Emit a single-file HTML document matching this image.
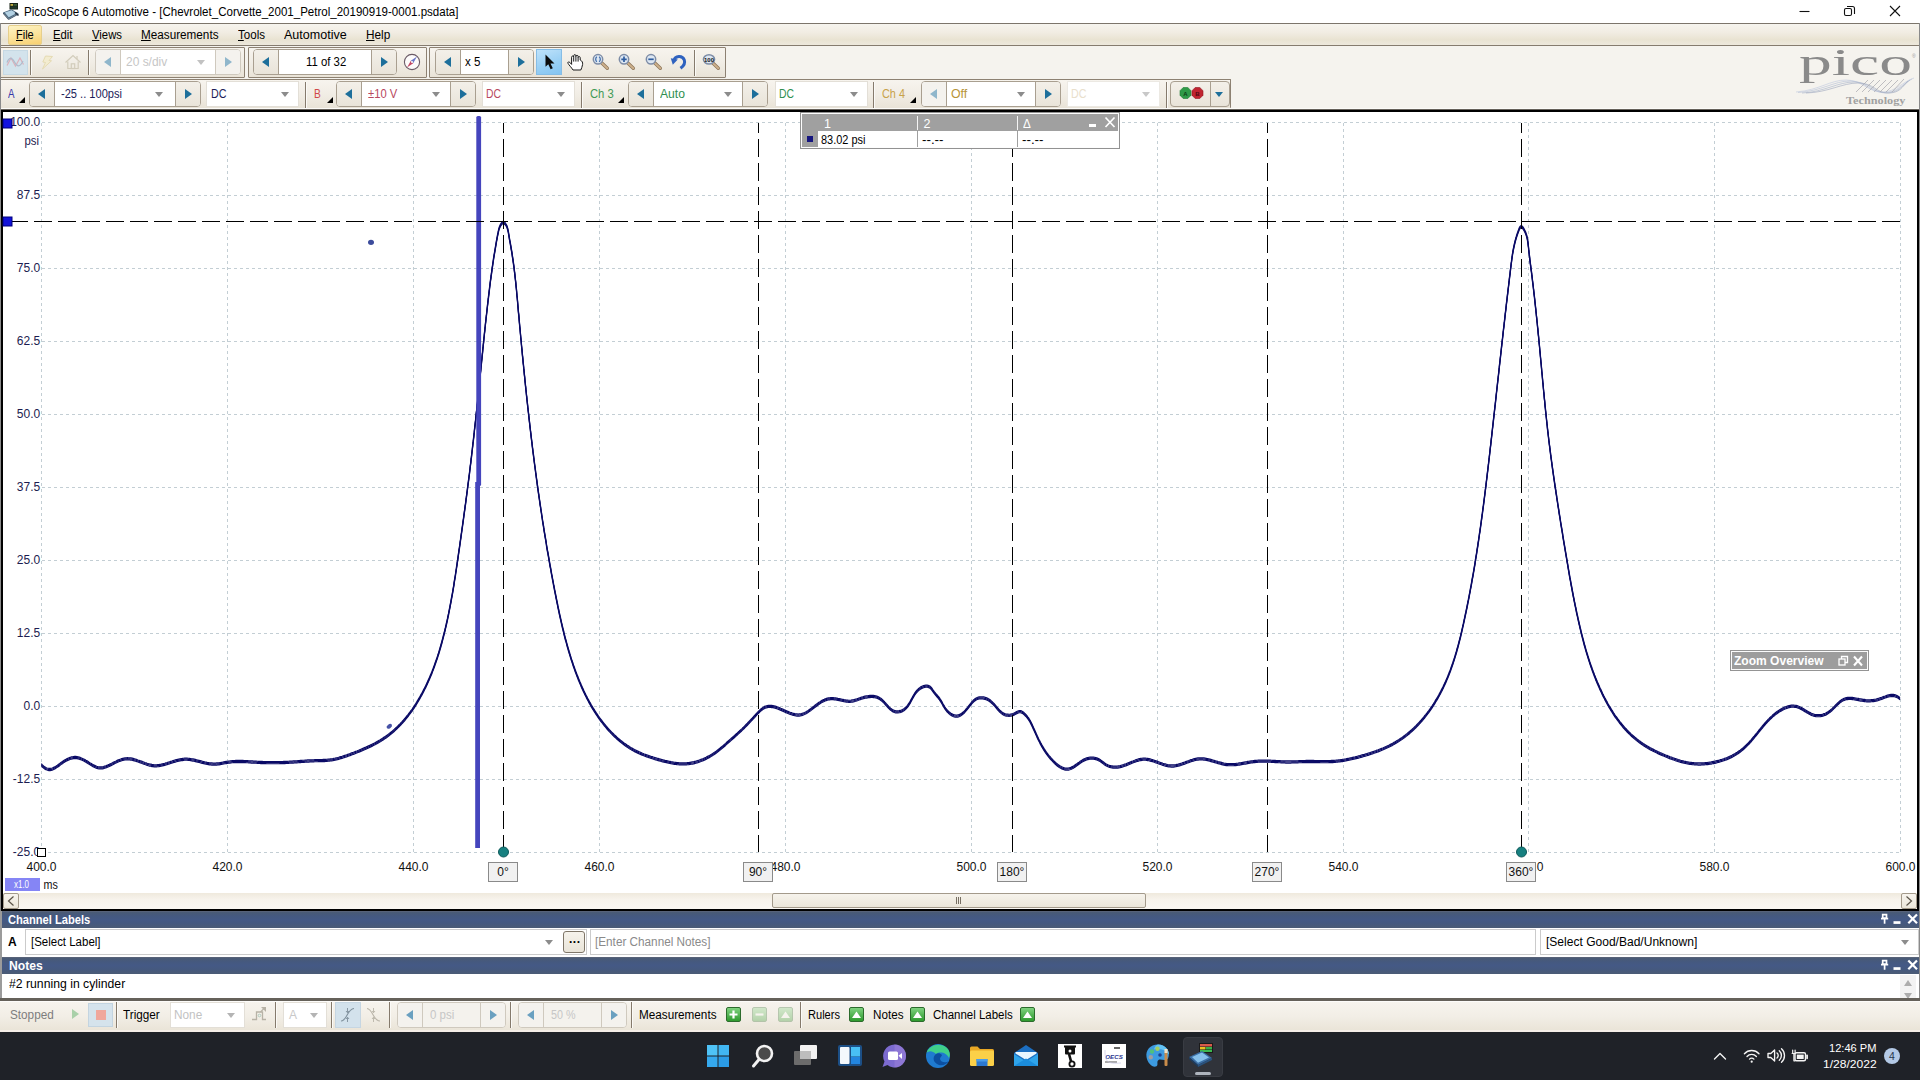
<!DOCTYPE html>
<html lang="en">
<head>
<meta charset="utf-8">
<title>PicoScope 6 Automotive</title>
<style>
*{box-sizing:border-box;margin:0;padding:0}
html,body{width:1920px;height:1080px;overflow:hidden;background:#f5f3ee;font-family:"Liberation Sans",sans-serif;font-size:12px;color:#000}
.abs{position:absolute}
.t{position:absolute;white-space:nowrap;line-height:14px}
#title{left:0;top:0;width:1920px;height:23px;background:#fff}
#menubar{left:0;top:23px;width:1920px;height:23px;border-top:1px solid #7c756b;border-bottom:1px solid #857b6e;background:linear-gradient(#f6f4ee,#f1ece2 42%,#e9e3d2 75%,#ede8dc)}
#tb1bg{left:0;top:46px;width:1920px;height:33px;background:#f5f3ee}
.grp{position:absolute;border:1px solid #8d8172;border-radius:1px;background:linear-gradient(#f7f4ee,#f1ede5 50%,#e9e3d7)}
.sep{position:absolute;width:1px;background:#857a6c;box-shadow:1px 0 0 #fbfaf7}
.spin{position:absolute;border:1px solid #a99f90;border-radius:4px;background:#fff;overflow:hidden}
.spin .b{position:absolute;top:0;bottom:0;width:25px;background:linear-gradient(#f3f0e9,#e9e4d9)}
.spin .b.l{left:0;border-right:1px solid #a99f90}
.spin .b.r{right:0;border-left:1px solid #a99f90}
.spin.dis{border-color:#cfc9be}
.spin.dis .b{background:#f4f2ee;border-color:#cfc9be}
.tri{position:absolute;width:0;height:0;border-style:solid}
.combo{position:absolute;background:#fff;border:1px solid #e3dfd7}
.dd{position:absolute;width:0;height:0;border-left:4.5px solid transparent;border-right:4.5px solid transparent;border-top:5px solid #8c8c8c}
#graph{left:1px;top:110px;width:1918px;height:801px;border:2px solid #000;background:#fff}
.dock{position:absolute;left:2px;width:1917px;height:17px;background:linear-gradient(#5e667a,#4a5b76 8%,#45597f 28%,#445985 50%,#45597f 72%,#4b5b75);color:#fff;font-weight:bold;font-size:13px}
.field{position:absolute;background:#fff;border:1px solid #cbcbcb}
#status{left:0;top:998px;width:1920px;height:34px;border-top:3px solid #65615a;box-shadow:inset 0 1px 0 #fdfcfa,inset 0 -2px 0 #f5eee7;background:linear-gradient(#f7f4ee,#f2eee6 50%,#e9e3d6)}
#status>*{margin-top:-2px}
#status .spin.dis{background:#f4f2ed}
#taskbar{left:0;top:1032px;width:1920px;height:48px;background:#1f2228}
.sbb{width:16px;height:16px;border:1px solid #a39a8b;border-radius:2px;background:linear-gradient(#f7f4ee,#ebe6da)}
.gbtn{position:absolute;width:15px;height:15px;border:1px solid #2c6b2c;border-radius:2px;background:linear-gradient(#7fd27f,#2e9a2e)}
</style>
</head>
<body>
<!-- ================= TITLE BAR ================= -->
<div id="title" class="abs">
  <svg class="abs" style="left:1.500px;top:2px" width="20" height="18" viewBox="0 0 20 18">
    <rect x="7.500" y="1" width="8.500" height="6.500" fill="#1a2418"/><rect x="8.500" y="2" width="2.500" height="1.800" fill="#c8b040"/><rect x="11.500" y="2" width="3.500" height="1.800" fill="#3a5a34"/><rect x="8.500" y="4.500" width="6.500" height="2.200" fill="#20382a"/>
    <polygon points="1,10.500 9.500,7.300 16.500,11.500 6.500,17" fill="#4e6a80"/><polygon points="2.800,10.600 9.500,8.200 14.600,11.300 6.700,15.300" fill="#b4d2e4"/><polygon points="1,10.500 6.500,17 6.500,18 1,11.800" fill="#2c3e50"/><polygon points="6.500,17 16.500,11.500 16.500,12.600 6.500,18" fill="#3a5066"/><path d="M13,10.500L16.500,13.500" stroke="#1e2a36" stroke-width="1.500"/>
  </svg>
  <div class="t"  style="left:23.6px;top:5px;font-size:12.4px;transform-origin:0 0;transform:scaleX(0.9303)">PicoScope 6 Automotive - [Chevrolet_Corvette_2001_Petrol_20190919-0001.psdata]</div>
  <svg class="abs" style="left:1790px;top:0" width="130" height="23" viewBox="0 0 130 23" fill="none" stroke="#111" stroke-width="1.1">
    <path d="M9.5,11.5h10"/>
    <rect x="54.5" y="8.5" width="7" height="7" rx="1.5"/><path d="M57,6.5h5.5a2,2 0 0 1 2,2V14"/>
    <path d="M100,6l10,10M110,6l-10,10"/>
  </svg>
</div>
<!-- ================= MENU BAR ================= -->
<div id="menubar" class="abs">
  <div class="abs" style="left:8px;top:1px;width:34px;height:20px;border:1px solid #e6cf8c;border-radius:2px;background:linear-gradient(170deg,#fdf3c4,#fbe29a 55%,#f8d070)"></div>
  <div class="t"  style="left:16px;top:4px;transform-origin:0 0;transform:scaleX(0.9169)"><u>F</u>ile</div>
  <div class="t"  style="left:53px;top:4px;transform-origin:0 0;transform:scaleX(0.9419)"><u>E</u>dit</div>
  <div class="t"  style="left:91.75px;top:4px;transform-origin:0 0;transform:scaleX(0.9430)"><u>V</u>iews</div>
  <div class="t"  style="left:141.25px;top:4px;transform-origin:0 0;transform:scaleX(0.9764)"><u>M</u>easurements</div>
  <div class="t"  style="left:237.5px;top:4px;transform-origin:0 0;transform:scaleX(0.9637)"><u>T</u>ools</div>
  <div class="t"  style="left:284.25px;top:4px;transform-origin:0 0;transform:scaleX(1.0453)">Automotive</div>
  <div class="t"  style="left:366.25px;top:4px;transform-origin:0 0;transform:scaleX(0.9823)"><u>H</u>elp</div>
</div>
<!--TOOLBARS_BEGIN-->
<!-- ================= TOOLBAR 1 ================= -->
<div class="grp" style="left:0;top:47px;width:245px;height:31px">
  <div class="abs" style="left:2px;top:2px;width:25px;height:25px;background:#d3e3ec;border:1px solid #c6d9e4"></div>
  <svg class="abs" style="left:5px;top:8px" width="20" height="12" viewBox="0 0 20 12" fill="none" stroke-width="1.200"><path d="M1,9.500 L5,2 L9.500,10 L14,2 L17.500,8.500" stroke="#dcb0ba"/><path d="M1,6.500 C3,1 6,1 8.500,6 S14,11.500 17,5" stroke="#aebccd"/></svg>
  <div class="sep" style="left:29px;top:2px;height:25px"></div>
  <svg class="abs" style="left:39px;top:7px" width="15" height="15" viewBox="0 0 15 15"><path d="M5.500,1 L12.500,1.500 L9,5.500 L11.500,5.800 L2.500,14 L5.500,7.500 L2.800,7 Z" fill="#f3ecd0" stroke="#e3d8ae" stroke-width="0.900"/></svg>
  <svg class="abs" style="left:63px;top:6px" width="18" height="16" viewBox="0 0 18 16" fill="none" stroke="#d2ccbb" stroke-width="1.200"><path d="M1.500,8.500 L9,1.500 L16.500,8.500"/><path d="M3.800,7.500 V14.500 H14.200 V7.500"/><rect x="7.300" y="9.800" width="3.400" height="4.700"/><path d="M13,2 V5"/></svg>
  <div class="sep" style="left:87px;top:2px;height:25px"></div>
  <div class="spin dis" style="left:94px;top:1px;width:146px;height:26px">
    <div class="b l"><i class="tri" style="left:8px;top:7px;border-width:5px 7px 5px 0;border-color:transparent #8fb6cb transparent transparent"></i></div>
    <div class="t"  style="left:29.750px;top:5px;color:#c6c6c6;font-size:12.500px;transform-origin:0 0;transform:scaleX(0.9572)">20 s/div</div>
    <i class="dd" style="left:101px;top:10px;border-top-color:#c2c2c2"></i>
    <div class="b r"><i class="tri" style="left:9px;top:7px;border-width:5px 0 5px 7px;border-color:transparent transparent transparent #8fb6cb"></i></div>
  </div>
</div>
<div class="grp" style="left:248px;top:47px;width:179px;height:31px">
  <div class="spin" style="left:4px;top:1px;width:144px;height:26px">
    <div class="b l"><i class="tri" style="left:8px;top:7px;border-width:5px 7px 5px 0;border-color:transparent #1d6f9b transparent transparent"></i></div>
    <div class="t"  style="left:51.5px;top:5px;font-size:12.5px;transform-origin:0 0;transform:scaleX(0.9093)">11 of 32</div>
    <div class="b r"><i class="tri" style="left:9px;top:7px;border-width:5px 0 5px 7px;border-color:transparent transparent transparent #1d6f9b"></i></div>
  </div>
  <svg class="abs" style="left:153px;top:4px" width="20" height="20" viewBox="0 0 20 20"><circle cx="10" cy="10" r="7.6" fill="#fdfbfb" stroke="#6a5a66" stroke-width="1.1"/><path d="M15,4.600 L11.200,11.200 L8.800,8.800 Z" fill="#6c78c8"/><path d="M5,15.400 L8.800,8.800 L11.200,11.200 Z" fill="#c24a66"/><circle cx="10" cy="10" r="1" fill="#fff"/></svg>
</div>
<div class="grp" style="left:429px;top:47px;width:297px;height:31px">
  <div class="spin" style="left:5px;top:1px;width:99px;height:26px">
    <div class="b l"><i class="tri" style="left:8px;top:7px;border-width:5px 7px 5px 0;border-color:transparent #1d6f9b transparent transparent"></i></div>
    <div class="t"  style="left:28.75px;top:5px;font-size:12.5px;transform-origin:0 0;transform:scaleX(0.9288)">x 5</div>
    <div class="b r"><i class="tri" style="left:9px;top:7px;border-width:5px 0 5px 7px;border-color:transparent transparent transparent #1d6f9b"></i></div>
  </div>
  <div class="abs" style="left:106px;top:1px;width:26px;height:26px;background:linear-gradient(160deg,#bfe2fa,#9ad0f5 55%,#84c4f2);border:1px solid #86bde6"></div>
  <svg class="abs" style="left:113px;top:5px" width="14" height="18" viewBox="0 0 14 18"><path d="M2.500,1.500 L2.500,13.800 L5.300,11.200 L7.600,16.300 L9.800,15.300 L7.500,10.400 L11.500,10.400 Z" fill="#0a0a0a"/></svg>
  <svg class="abs" style="left:135.500px;top:4px" width="20" height="20" viewBox="0 0 20 20" fill="#fff" stroke="#1a1a1a" stroke-width="1" stroke-linejoin="round"><path d="M7,18 C5.500,15.500 3,13.200 2,11.300 C1.400,10.100 2.800,9.300 3.800,10.400 L5.600,12.400 V5.200 C5.600,3.600 7.700,3.600 7.700,5.200 V3.800 C7.700,2.200 9.900,2.200 9.900,3.800 V4.400 C9.900,2.900 12.100,2.900 12.100,4.400 V5.600 C12.100,4.200 14.200,4.200 14.200,5.600 V8 C16.300,9 16.800,10.500 16.600,12.500 C16.400,14.800 15.300,16.300 14.800,18 Z"/><path d="M7.700,5.200V9.600M9.900,4.200V9.600M12.100,5.600V9.600" fill="none"/></svg>
  <svg class="abs" style="left:159.7px;top:4px" width="22" height="20" viewBox="0 0 22 20"><path d="M11.300,10.600 L17.300,16.300" stroke="#8c7458" stroke-width="3.400" stroke-linecap="round"/><path d="M11.300,10.600 L17.300,16.300" stroke="#cdb08c" stroke-width="2" stroke-linecap="round"/><ellipse cx="8" cy="7.300" rx="4.7" ry="4.7" fill="#dde7f2" stroke="#7d8ca6" stroke-width="1.500"/><path d="M6.900,4.800 C5.300,5.800 5.300,8.800 6.900,9.800 M9.100,4.800 C10.700,5.800 10.700,8.800 9.100,9.800" fill="none" stroke="#3a68a8" stroke-width="1.200"/></svg>
  <svg class="abs" style="left:186.3px;top:4px" width="22" height="20" viewBox="0 0 22 20"><path d="M11.300,10.600 L17.300,16.300" stroke="#8c7458" stroke-width="3.400" stroke-linecap="round"/><path d="M11.300,10.600 L17.300,16.300" stroke="#cdb08c" stroke-width="2" stroke-linecap="round"/><ellipse cx="8" cy="7.300" rx="4.7" ry="4.7" fill="#dde7f2" stroke="#7d8ca6" stroke-width="1.500"/><path d="M5.300,7.300 H10.700 M8,4.600 V10" fill="none" stroke="#2f5da0" stroke-width="1.700"/></svg>
  <svg class="abs" style="left:212.8px;top:4px" width="22" height="20" viewBox="0 0 22 20"><path d="M11.300,10.600 L17.300,16.300" stroke="#8c7458" stroke-width="3.400" stroke-linecap="round"/><path d="M11.300,10.600 L17.300,16.300" stroke="#cdb08c" stroke-width="2" stroke-linecap="round"/><ellipse cx="8" cy="7.300" rx="4.7" ry="4.7" fill="#dde7f2" stroke="#7d8ca6" stroke-width="1.500"/><path d="M5.300,7.300 H10.700" fill="none" stroke="#2f5da0" stroke-width="1.700"/></svg>
  <svg class="abs" style="left:239px;top:4px" width="20" height="20" viewBox="0 0 20 20"><path d="M5,8.500 C6,3.500 13.500,3 15.300,8 C16.500,11.500 14,14.500 11.500,16.300" fill="none" stroke="#2f62bf" stroke-width="3"/><path d="M1.800,6.300 L8.800,7.600 L3.800,12.800 Z" fill="#2f62bf"/></svg>
  <div class="sep" style="left:264px;top:2px;height:26px"></div>
  <svg class="abs" style="left:270.6px;top:4px" width="22" height="20" viewBox="0 0 22 20"><path d="M11.300,10.600 L17.300,16.300" stroke="#8c7458" stroke-width="3.400" stroke-linecap="round"/><path d="M11.300,10.600 L17.300,16.300" stroke="#cdb08c" stroke-width="2" stroke-linecap="round"/><ellipse cx="8" cy="7.300" rx="5.6" ry="4.6" fill="#dde7f2" stroke="#7d8ca6" stroke-width="1.500"/><text x="8" y="9.500" font-family="Liberation Sans, sans-serif" font-size="6" font-weight="bold" text-anchor="middle" fill="#111">100</text></svg>
</div>
<!-- ================= TOOLBAR 2 ================= -->
<div class="abs" style="left:0;top:108px;width:1920px;height:1px;background:#fcfbf8"></div><div class="abs" style="left:0;top:109px;width:1920px;height:1px;background:#66615a"></div>
<div class="grp" style="left:0;top:79px;width:1231px;height:29px;border-bottom:none">
  <!-- A -->
  <div class="t"  style="left:6.5px;top:7px;color:#3535a8;font-size:12.5px;transform-origin:0 0;transform:scaleX(0.7790)">A</div><i class="tri" style="left:17.5px;top:16.5px;border-width:0 0 6px 6px;border-color:transparent transparent #000 transparent"></i>
  <div class="spin" style="left:28px;top:1px;width:172px;height:26px">
    <div class="b l"><i class="tri" style="left:8px;top:7px;border-width:5px 7px 5px 0;border-color:transparent #1d6f9b transparent transparent"></i></div>
    <div class="t"  style="left:30.75px;top:5px;color:#1c1c58;font-size:12.5px;transform-origin:0 0;transform:scaleX(0.8867)">-25 .. 100psi</div>
    <i class="dd" style="left:125px;top:10px"></i>
    <div class="b r"><i class="tri" style="left:9px;top:7px;border-width:5px 0 5px 7px;border-color:transparent transparent transparent #1d6f9b"></i></div>
  </div>
  <div class="combo" style="left:205px;top:1px;width:93px;height:26px"><div class="t"  style="left:3.75px;top:5px;color:#1c1c58;font-size:12.5px;transform-origin:0 0;transform:scaleX(0.8581)">DC</div><i class="dd" style="left:74px;top:10px"></i></div>
  <div class="sep" style="left:304px;top:2px;height:26px"></div>
  <!-- B -->
  <div class="t"  style="left:312.75px;top:7px;color:#d04848;font-size:12.5px;transform-origin:0 0;transform:scaleX(0.8150)">B</div><i class="tri" style="left:325.5px;top:16.5px;border-width:0 0 6px 6px;border-color:transparent transparent #000 transparent"></i>
  <div class="spin" style="left:335px;top:1px;width:140px;height:26px">
    <div class="b l"><i class="tri" style="left:8px;top:7px;border-width:5px 7px 5px 0;border-color:transparent #1d6f9b transparent transparent"></i></div>
    <div class="t"  style="left:30.5px;top:5px;color:#b84860;font-size:12.5px;transform-origin:0 0;transform:scaleX(0.8978)">±10 V</div>
    <i class="dd" style="left:95px;top:10px"></i>
    <div class="b r"><i class="tri" style="left:9px;top:7px;border-width:5px 0 5px 7px;border-color:transparent transparent transparent #1d6f9b"></i></div>
  </div>
  <div class="combo" style="left:481px;top:1px;width:93px;height:26px"><div class="t"  style="left:3.25px;top:5px;color:#b84860;font-size:12.5px;transform-origin:0 0;transform:scaleX(0.8304)">DC</div><i class="dd" style="left:74px;top:10px"></i></div>
  <div class="sep" style="left:580px;top:2px;height:26px"></div>
  <!-- Ch 3 -->
  <div class="t"  style="left:589px;top:7px;color:#3f9a55;font-size:12.5px;transform-origin:0 0;transform:scaleX(0.8994)">Ch 3</div><i class="tri" style="left:616.5px;top:16.5px;border-width:0 0 6px 6px;border-color:transparent transparent #000 transparent"></i>
  <div class="spin" style="left:627px;top:1px;width:140px;height:26px">
    <div class="b l"><i class="tri" style="left:8px;top:7px;border-width:5px 7px 5px 0;border-color:transparent #1d6f9b transparent transparent"></i></div>
    <div class="t"  style="left:30.5px;top:5px;color:#2f8f50;font-size:12.5px;transform-origin:0 0;transform:scaleX(0.9721)">Auto</div>
    <i class="dd" style="left:95px;top:10px"></i>
    <div class="b r"><i class="tri" style="left:9px;top:7px;border-width:5px 0 5px 7px;border-color:transparent transparent transparent #1d6f9b"></i></div>
  </div>
  <div class="combo" style="left:774px;top:1px;width:93px;height:26px"><div class="t"  style="left:2.75px;top:5px;color:#2f8f50;font-size:12.5px;transform-origin:0 0;transform:scaleX(0.8304)">DC</div><i class="dd" style="left:74px;top:10px"></i></div>
  <div class="sep" style="left:872px;top:2px;height:26px"></div>
  <!-- Ch 4 -->
  <div class="t"  style="left:881px;top:7px;color:#c8a24a;font-size:12.5px;transform-origin:0 0;transform:scaleX(0.8710)">Ch 4</div><i class="tri" style="left:908.5px;top:16.5px;border-width:0 0 6px 6px;border-color:transparent transparent #000 transparent"></i>
  <div class="spin" style="left:920px;top:1px;width:140px;height:26px">
    <div class="b l" style="background:#f4f2ee"><i class="tri" style="left:8px;top:7px;border-width:5px 7px 5px 0;border-color:transparent #8fb6cb transparent transparent"></i></div>
    <div class="t"  style="left:29.25px;top:5px;color:#b89438;font-size:12.5px;transform-origin:0 0;transform:scaleX(0.9877)">Off</div>
    <i class="dd" style="left:95px;top:10px"></i>
    <div class="b r"><i class="tri" style="left:9px;top:7px;border-width:5px 0 5px 7px;border-color:transparent transparent transparent #1d6f9b"></i></div>
  </div>
  <div class="combo" style="left:1066px;top:1px;width:93px;height:26px;border-color:#ece9e3"><div class="t"  style="left:2.75px;top:5px;color:#e9e0cc;font-size:12.5px;transform-origin:0 0;transform:scaleX(0.8581)">DC</div><i class="dd" style="left:74px;top:10px;border-top-color:#c8c8c8"></i></div>
  <div class="sep" style="left:1165px;top:2px;height:26px"></div>
  <div class="spin" style="left:1169px;top:1px;width:60px;height:26px;background:linear-gradient(#f3f0e9,#e9e4d9)">
    <svg class="abs" style="left:8px;top:5px" width="26" height="14" viewBox="0 0 26 14"><polygon points="4.200,0.500 8.800,0.500 12,3.700 12,8.300 8.800,11.500 4.200,11.500 1,8.300 1,3.700" fill="#2f9a48" stroke="#1e7a34" stroke-width=".6"/><polygon points="16.200,0.500 20.800,0.500 24,3.700 24,8.300 20.800,11.500 16.200,11.500 13,8.300 13,3.700" fill="#c02430" stroke="#8e1420" stroke-width=".6"/><text x="6.500" y="8.500" font-family="Liberation Sans, sans-serif" font-size="6" font-weight="bold" text-anchor="middle" fill="#0d3d18">A</text><text x="18.500" y="8.500" font-family="Liberation Sans, sans-serif" font-size="6" font-weight="bold" text-anchor="middle" fill="#4d0810">B</text></svg>
    <div class="abs" style="left:39px;top:0;width:1px;height:26px;background:#a99f90"></div>
    <i class="dd" style="left:44px;top:10px;border-top-color:#1d6f9b"></i>
  </div>
</div>
<!-- pico logo -->
<svg class="abs" style="left:1790px;top:46px" width="130" height="62" viewBox="0 0 130 62">
  <g fill="none" stroke-width="0.7" opacity=".75">
    <path d="M6,46 C30,44 40,34 56,34 S78,46 92,46 S112,36 124,32" stroke="#b7c3dc"/>
    <path d="M8,46.500 C32,45 44,35 60,35 S80,46.500 94,46.500 S112,38 122,33" stroke="#a9b6d2"/>
    <path d="M12,47 C34,46 48,36 64,36 S84,47 96,47 S112,40 120,34" stroke="#9aa7c4"/>
    <path d="M16,47 C38,46.500 52,37 68,37 S86,47 98,47 S112,41 118,35" stroke="#8f9bb6"/>
    <path d="M78,34 L66,46 M84,34 L72,46 M90,34 L78,46 M96,34 L84,46 M102,34 L90,46 M108,34 L96,46 M114,33 L102,46" stroke="#8c8c96"/>
  </g>
  <text x="9" y="29" font-family="Liberation Serif, serif" font-size="38" fill="#8a8a8a" textLength="113" lengthAdjust="spacingAndGlyphs">pico</text>
  <text x="122" y="12" font-family="Liberation Sans, sans-serif" font-size="5" fill="#9a9a9a">®</text>
  <text x="56" y="57.500" font-family="Liberation Serif, serif" font-size="10.500" font-weight="bold" fill="#a2a2a2" textLength="59.5" lengthAdjust="spacingAndGlyphs">Technology</text>
</svg>
<!--TOOLBARS_END-->
<!-- ================= GRAPH ================= -->
<div id="graph" class="abs"></div>
<svg class="abs" style="left:0;top:0" width="1920" height="1080" viewBox="0 0 1920 1080" font-family="Liberation Sans, sans-serif" font-size="12">
  <defs><path id="wv" d="M41.3,764.6 42.4,765.9 43.6,767 44.7,767.9 45.9,768.6 47,769 48,769.3 49.1,769.5 50.1,769.5 51.2,769.3 52.2,769.1 53.2,768.7 54.2,768.2 55.2,767.6 56.2,767 57.3,766.3 58.3,765.6 59.3,764.9 60.3,764.1 61.3,763.3 62.4,762.6 63.5,761.8 64.5,761.1 65.6,760.5 66.7,759.9 67.8,759.3 69,758.8 70.1,758.4 71.2,758 72.4,757.8 73.5,757.6 74.6,757.5 75.8,757.5 76.9,757.6 78.1,757.9 79.2,758.2 80.3,758.5 81.5,759 82.6,759.5 83.7,760 84.9,760.6 86,761.3 87.1,761.9 88.2,762.6 89.2,763.3 90.3,764 91.4,764.6 92.5,765.3 93.6,765.9 94.7,766.4 95.7,766.9 96.8,767.3 97.9,767.6 99,767.8 100.1,767.9 101.2,767.9 102.4,767.8 103.5,767.6 104.6,767.2 105.8,766.9 106.9,766.4 108.1,765.9 109.2,765.4 110.4,764.8 111.5,764.3 112.7,763.7 113.8,763.1 114.9,762.5 116.1,762 117.2,761.4 118.3,760.9 119.4,760.5 120.6,760.1 121.7,759.7 122.8,759.4 123.9,759.1 125.1,758.9 126.2,758.8 127.4,758.7 128.5,758.8 129.7,758.9 130.9,759 132.1,759.2 133.2,759.5 134.4,759.8 135.6,760.2 136.8,760.5 137.9,761 139.1,761.4 140.3,761.8 141.5,762.2 142.6,762.7 143.8,763.1 144.9,763.5 146.1,763.9 147.2,764.3 148.4,764.7 149.5,765 150.7,765.2 151.9,765.5 153,765.6 154.2,765.8 155.3,765.8 156.5,765.8 157.7,765.7 158.9,765.6 160,765.4 161.2,765.2 162.4,764.9 163.6,764.6 164.7,764.3 165.9,763.9 167.1,763.6 168.3,763.2 169.5,762.8 170.6,762.4 171.8,762.1 173,761.7 174.2,761.3 175.3,761 176.5,760.7 177.7,760.4 178.8,760.1 180,759.8 181.2,759.6 182.3,759.5 183.5,759.3 184.7,759.2 185.9,759.2 187,759.2 188.2,759.3 189.4,759.4 190.6,759.6 191.8,759.8 192.9,760 194.1,760.2 195.3,760.5 196.5,760.8 197.7,761.1 198.9,761.4 200.1,761.7 201.2,762 202.4,762.3 203.6,762.6 204.8,762.9 206,763.1 207.2,763.4 208.3,763.6 209.5,763.8 210.7,763.9 211.9,764 213.1,764.1 214.3,764.1 215.5,764.1 216.7,764 217.9,763.9 219,763.8 220.2,763.6 221.4,763.4 222.6,763.2 223.8,762.9 225,762.7 226.2,762.5 227.4,762.3 228.6,762.1 229.8,762 231,761.8 232.2,761.7 233.4,761.6 234.6,761.6 235.8,761.5 237,761.5 238.2,761.5 239.4,761.5 240.6,761.5 241.8,761.5 242.9,761.5 244.1,761.6 245.3,761.6 246.5,761.7 247.7,761.7 248.9,761.8 250.1,761.9 251.3,762 252.5,762 253.7,762.1 254.9,762.2 256.1,762.2 257.3,762.3 258.5,762.4 259.7,762.4 260.9,762.5 262.1,762.5 263.3,762.6 264.5,762.6 265.7,762.6 266.9,762.7 268.1,762.7 269.3,762.7 270.5,762.7 271.7,762.7 272.9,762.7 274.1,762.7 275.3,762.7 276.5,762.7 277.7,762.7 278.9,762.7 280.1,762.6 281.3,762.6 282.5,762.6 283.7,762.5 284.9,762.5 286.1,762.4 287.3,762.4 288.5,762.3 289.7,762.2 290.9,762.2 292.1,762.1 293.3,762 294.5,761.9 295.7,761.8 296.9,761.8 298.1,761.7 299.3,761.6 300.4,761.5 301.6,761.4 302.8,761.3 304,761.3 305.2,761.2 306.4,761.1 307.6,761 308.8,761 310,760.9 311.3,760.9 312.5,760.8 313.7,760.8 314.9,760.7 316.1,760.7 317.3,760.7 318.5,760.6 319.7,760.6 320.9,760.6 322.1,760.6 323.3,760.5 324.5,760.5 325.7,760.4 326.9,760.3 328.1,760.2 329.3,760.1 330.5,759.9 331.7,759.8 332.8,759.6 334,759.3 335.2,759.1 336.3,758.8 337.5,758.6 338.6,758.3 339.8,757.9 340.9,757.6 342,757.3 343.2,756.9 344.3,756.5 345.4,756.2 346.6,755.8 347.7,755.4 348.8,755 350,754.6 351.1,754.1 352.2,753.7 353.4,753.3 354.5,752.9 355.6,752.4 356.8,752 357.9,751.5 359,751.1 360.2,750.6 361.3,750.2 362.4,749.7 363.5,749.2 364.6,748.7 365.8,748.2 366.9,747.7 368,747.2 369.1,746.7 370.2,746.2 371.3,745.6 372.3,745.1 373.4,744.5 374.5,744 375.6,743.4 376.6,742.8 377.7,742.2 378.7,741.6 379.8,741 380.8,740.4 381.8,739.7 382.8,739.1 383.8,738.4 384.8,737.7 385.8,737.1 386.8,736.4 387.7,735.7 388.7,734.9 389.6,734.2 390.5,733.5 391.5,732.7 392.4,732 393.3,731.2 394.2,730.4 395.1,729.6 395.9,728.8 396.8,728 397.7,727.1 398.5,726.3 399.3,725.5 400.2,724.6 401,723.7 401.8,722.9 402.6,722 403.4,721.1 404.2,720.2 405,719.3 405.7,718.4 406.5,717.4 407.2,716.5 408,715.6 408.7,714.6 409.4,713.7 410.2,712.7 410.9,711.7 411.6,710.8 412.3,709.8 412.9,708.8 413.6,707.8 414.3,706.8 414.9,705.8 415.6,704.8 416.2,703.8 416.9,702.7 417.5,701.7 418.1,700.7 418.7,699.6 419.3,698.6 419.9,697.6 420.5,696.5 421.1,695.4 421.7,694.4 422.3,693.3 422.8,692.3 423.4,691.2 423.9,690.1 424.5,689 425,688 425.6,686.9 426.1,685.8 426.6,684.7 427.1,683.6 427.6,682.5 428.1,681.4 428.6,680.3 429.1,679.2 429.6,678.1 430,677 430.5,675.9 431,674.8 431.4,673.7 431.9,672.6 432.3,671.5 432.7,670.3 433.2,669.2 433.6,668.1 434,667 434.4,665.9 434.8,664.7 435.2,663.6 435.6,662.5 436,661.3 436.4,660.2 436.8,659.1 437.2,657.9 437.6,656.8 437.9,655.6 438.3,654.5 438.7,653.4 439,652.2 439.4,651.1 439.7,649.9 440,648.8 440.4,647.6 440.7,646.5 441,645.3 441.4,644.1 441.7,643 442,641.8 442.3,640.7 442.6,639.5 442.9,638.4 443.2,637.2 443.5,636 443.8,634.9 444.1,633.7 444.4,632.5 444.7,631.4 445,630.2 445.3,629 445.5,627.9 445.8,626.7 446.1,625.5 446.3,624.4 446.6,623.2 446.9,622 447.1,620.8 447.4,619.7 447.6,618.5 447.9,617.3 448.1,616.1 448.4,615 448.6,613.8 448.8,612.6 449.1,611.4 449.3,610.3 449.5,609.1 449.8,607.9 450,606.7 450.2,605.6 450.4,604.4 450.7,603.2 450.9,602 451.1,600.8 451.3,599.7 451.5,598.5 451.7,597.3 452,596.1 452.2,594.9 452.4,593.7 452.6,592.6 452.8,591.4 453,590.2 453.2,589 453.4,587.8 453.6,586.6 453.8,585.5 454,584.3 454.1,583.1 454.3,581.9 454.5,580.7 454.7,579.5 454.9,578.4 455.1,577.2 455.3,576 455.5,574.8 455.6,573.6 455.8,572.4 456,571.2 456.2,570 456.4,568.9 456.5,567.7 456.7,566.5 456.9,565.3 457.1,564.1 457.2,562.9 457.4,561.7 457.6,560.5 457.8,559.4 457.9,558.2 458.1,557 458.3,555.8 458.4,554.6 458.6,553.4 458.8,552.2 458.9,551 459.1,549.9 459.3,548.7 459.5,547.5 459.6,546.3 459.8,545.1 460,543.9 460.1,542.7 460.3,541.5 460.5,540.3 460.6,539.2 460.8,538 461,536.8 461.1,535.6 461.3,534.4 461.5,533.2 461.6,532 461.8,530.8 462,529.6 462.1,528.4 462.3,527.3 462.5,526.1 462.6,524.9 462.8,523.7 463,522.5 463.1,521.3 463.3,520.1 463.5,518.9 463.6,517.7 463.8,516.6 463.9,515.4 464.1,514.2 464.3,513 464.4,511.8 464.6,510.6 464.8,509.4 464.9,508.2 465.1,507 465.2,505.8 465.4,504.7 465.6,503.5 465.7,502.3 465.9,501.1 466,499.9 466.2,498.7 466.3,497.5 466.5,496.3 466.7,495.1 466.8,493.9 467,492.7 467.1,491.6 467.3,490.4 467.4,489.2 467.6,488 467.7,486.8 467.9,485.6 468,484.4 468.2,483.2 468.4,482 468.5,480.8 468.7,479.7 468.8,478.5 469,477.3 469.1,476.1 469.3,474.9 469.4,473.7 469.6,472.5 469.7,471.3 469.8,470.1 470,468.9 470.1,467.7 470.3,466.5 470.4,465.4 470.6,464.2 470.7,463 470.9,461.8 471,460.6 471.1,459.4 471.3,458.2 471.4,457 471.6,455.8 471.7,454.6 471.8,453.4 472,452.3 472.1,451.1 472.3,449.9 472.4,448.7 472.5,447.5 472.7,446.3 472.8,445.1 472.9,443.9 473.1,442.7 473.2,441.5 473.4,440.3 473.5,439.1 473.6,437.9 473.8,436.8 473.9,435.6 474,434.4 474.2,433.2 474.3,432 474.4,430.8 474.5,429.6 474.7,428.4 474.8,427.2 474.9,426 475.1,424.8 475.2,423.6 475.3,422.4 475.5,421.3 475.6,420.1 475.7,418.9 475.8,417.7 476,416.5 476.1,415.3 476.2,414.1 476.3,412.9 476.5,411.7 476.6,410.5 476.7,409.3 476.9,408.1 477,406.9 477.1,405.7 477.2,404.6 477.4,403.4 477.5,402.2 477.6,401 477.7,399.8 477.8,398.6 478,397.4 478.1,396.2 478.2,395 478.3,393.8 478.5,392.6 478.6,391.4 478.7,390.2 478.8,389 479,387.8 479.1,386.6 479.2,385.4 479.3,384.3 479.4,383.1 479.6,381.9 479.7,380.7 479.8,379.5 479.9,378.3 480,377.1 480.2,375.9 480.3,374.7 480.4,373.5 480.5,372.3 480.7,371.1 480.8,369.9 480.9,368.7 481,367.5 481.1,366.3 481.3,365.1 481.4,363.9 481.5,362.7 481.6,361.6 481.7,360.4 481.9,359.2 482,358 482.1,356.8 482.2,355.6 482.3,354.4 482.5,353.2 482.6,352 482.7,350.8 482.8,349.6 482.9,348.4 483.1,347.2 483.2,346 483.3,344.8 483.4,343.6 483.6,342.4 483.7,341.2 483.8,340 483.9,338.8 484,337.6 484.2,336.4 484.3,335.2 484.4,334 484.5,332.9 484.7,331.7 484.8,330.5 484.9,329.3 485,328.1 485.2,326.9 485.3,325.7 485.4,324.5 485.5,323.3 485.7,322.1 485.8,320.9 485.9,319.7 486.1,318.5 486.2,317.3 486.3,316.1 486.5,314.9 486.6,313.7 486.7,312.5 486.9,311.4 487,310.2 487.1,309 487.3,307.8 487.4,306.6 487.5,305.4 487.7,304.2 487.8,303 487.9,301.8 488.1,300.6 488.2,299.4 488.4,298.2 488.5,297.1 488.6,295.9 488.8,294.7 488.9,293.5 489.1,292.3 489.2,291.1 489.4,289.9 489.5,288.7 489.6,287.5 489.8,286.4 489.9,285.2 490.1,284 490.2,282.8 490.4,281.6 490.5,280.4 490.7,279.2 490.9,278.1 491,276.9 491.2,275.7 491.3,274.5 491.5,273.3 491.7,272.1 491.8,270.9 492,269.8 492.1,268.6 492.3,267.4 492.5,266.2 492.7,265 492.8,263.8 493,262.6 493.2,261.5 493.4,260.3 493.5,259.1 493.7,257.9 493.9,256.7 494.1,255.5 494.3,254.3 494.5,253.1 494.7,252 494.9,250.8 495.1,249.6 495.3,248.4 495.5,247.2 495.7,246 495.9,244.8 496.1,243.6 496.3,242.4 496.5,241.2 496.7,240 497,238.8 497.2,237.6 497.4,236.4 497.6,235.2 497.9,234 498.1,232.8 498.4,231.6 498.6,230.4 498.9,229.2 499.3,228.1 499.7,227 500.2,225.9 500.7,224.9 501.4,224 502.1,223.1 502.9,222.5 503.8,222.5 504.6,223.2 505.4,224 506,225 506.6,226 507.1,227.1 507.4,228.2 507.8,229.4 508,230.6 508.3,231.8 508.5,233 508.7,234.3 508.9,235.5 509.1,236.7 509.3,238 509.5,239.2 509.7,240.4 510,241.6 510.2,242.8 510.4,244 510.6,245.1 510.8,246.3 511,247.5 511.2,248.7 511.4,249.9 511.6,251.1 511.8,252.2 512,253.4 512.2,254.6 512.3,255.8 512.5,256.9 512.7,258.1 512.9,259.3 513,260.5 513.2,261.7 513.4,262.8 513.5,264 513.7,265.2 513.9,266.4 514,267.6 514.2,268.8 514.3,270 514.4,271.1 514.6,272.3 514.7,273.5 514.9,274.7 515,275.9 515.1,277.1 515.3,278.3 515.4,279.5 515.5,280.7 515.7,281.9 515.8,283.1 515.9,284.2 516,285.4 516.1,286.6 516.3,287.8 516.4,289 516.5,290.2 516.6,291.4 516.7,292.6 516.8,293.8 516.9,295 517,296.2 517.2,297.4 517.3,298.6 517.4,299.8 517.5,301 517.6,302.2 517.7,303.4 517.8,304.6 517.9,305.8 518,307 518.1,308.2 518.2,309.4 518.3,310.6 518.4,311.8 518.5,313 518.7,314.1 518.8,315.3 518.9,316.5 519,317.7 519.1,318.9 519.2,320.1 519.3,321.3 519.4,322.5 519.5,323.7 519.6,324.9 519.7,326.1 519.8,327.3 520,328.5 520.1,329.7 520.2,330.9 520.3,332.1 520.4,333.3 520.5,334.5 520.6,335.7 520.7,336.9 520.8,338.1 521,339.3 521.1,340.5 521.2,341.7 521.3,342.9 521.4,344.1 521.5,345.3 521.6,346.4 521.7,347.6 521.9,348.8 522,350 522.1,351.2 522.2,352.4 522.3,353.6 522.4,354.8 522.5,356 522.7,357.2 522.8,358.4 522.9,359.6 523,360.8 523.1,362 523.2,363.2 523.4,364.4 523.5,365.6 523.6,366.8 523.7,368 523.8,369.2 524,370.4 524.1,371.6 524.2,372.7 524.3,373.9 524.4,375.1 524.6,376.3 524.7,377.5 524.8,378.7 524.9,379.9 525,381.1 525.2,382.3 525.3,383.5 525.4,384.7 525.5,385.9 525.7,387.1 525.8,388.3 525.9,389.5 526,390.7 526.2,391.9 526.3,393 526.4,394.2 526.5,395.4 526.7,396.6 526.8,397.8 526.9,399 527,400.2 527.2,401.4 527.3,402.6 527.4,403.8 527.6,405 527.7,406.2 527.8,407.4 528,408.6 528.1,409.8 528.2,410.9 528.4,412.1 528.5,413.3 528.6,414.5 528.8,415.7 528.9,416.9 529,418.1 529.2,419.3 529.3,420.5 529.4,421.7 529.6,422.9 529.7,424.1 529.8,425.3 530,426.5 530.1,427.6 530.3,428.8 530.4,430 530.5,431.2 530.7,432.4 530.8,433.6 531,434.8 531.1,436 531.2,437.2 531.4,438.4 531.5,439.6 531.7,440.8 531.8,441.9 532,443.1 532.1,444.3 532.2,445.5 532.4,446.7 532.5,447.9 532.7,449.1 532.8,450.3 533,451.5 533.1,452.7 533.3,453.9 533.4,455 533.6,456.2 533.7,457.4 533.9,458.6 534,459.8 534.2,461 534.3,462.2 534.5,463.4 534.6,464.6 534.8,465.8 535,466.9 535.1,468.1 535.3,469.3 535.4,470.5 535.6,471.7 535.7,472.9 535.9,474.1 536.1,475.3 536.2,476.5 536.4,477.6 536.5,478.8 536.7,480 536.9,481.2 537,482.4 537.2,483.6 537.3,484.8 537.5,486 537.7,487.2 537.8,488.3 538,489.5 538.2,490.7 538.3,491.9 538.5,493.1 538.7,494.3 538.8,495.5 539,496.7 539.2,497.8 539.4,499 539.5,500.2 539.7,501.4 539.9,502.6 540,503.8 540.2,505 540.4,506.2 540.6,507.3 540.7,508.5 540.9,509.7 541.1,510.9 541.3,512.1 541.5,513.3 541.6,514.5 541.8,515.7 542,516.8 542.2,518 542.4,519.2 542.5,520.4 542.7,521.6 542.9,522.8 543.1,524 543.3,525.1 543.5,526.3 543.7,527.5 543.8,528.7 544,529.9 544.2,531.1 544.4,532.3 544.6,533.4 544.8,534.6 545,535.8 545.2,537 545.4,538.2 545.6,539.4 545.8,540.5 546,541.7 546.2,542.9 546.4,544.1 546.5,545.3 546.7,546.5 546.9,547.7 547.1,548.8 547.3,550 547.5,551.2 547.8,552.4 548,553.6 548.2,554.8 548.4,555.9 548.6,557.1 548.8,558.3 549,559.5 549.2,560.7 549.4,561.8 549.6,563 549.8,564.2 550,565.4 550.2,566.6 550.5,567.8 550.7,568.9 550.9,570.1 551.1,571.3 551.3,572.5 551.5,573.7 551.7,574.9 552,576 552.2,577.2 552.4,578.4 552.6,579.6 552.8,580.8 553.1,581.9 553.3,583.1 553.5,584.3 553.7,585.5 554,586.7 554.2,587.8 554.4,589 554.6,590.2 554.9,591.4 555.1,592.6 555.3,593.7 555.6,594.9 555.8,596.1 556,597.3 556.3,598.5 556.5,599.6 556.7,600.8 557,602 557.2,603.2 557.5,604.4 557.7,605.5 557.9,606.7 558.2,607.9 558.4,609.1 558.7,610.2 558.9,611.4 559.2,612.6 559.4,613.8 559.7,614.9 559.9,616.1 560.2,617.3 560.5,618.5 560.7,619.6 561,620.8 561.3,622 561.5,623.2 561.8,624.3 562.1,625.5 562.3,626.7 562.6,627.8 562.9,629 563.2,630.2 563.5,631.3 563.8,632.5 564,633.7 564.3,634.8 564.6,636 564.9,637.2 565.2,638.3 565.5,639.5 565.9,640.6 566.2,641.8 566.5,642.9 566.8,644.1 567.1,645.3 567.4,646.4 567.8,647.6 568.1,648.7 568.4,649.9 568.8,651 569.1,652.2 569.5,653.3 569.8,654.5 570.2,655.6 570.5,656.8 570.9,657.9 571.2,659 571.6,660.2 572,661.3 572.4,662.5 572.7,663.6 573.1,664.7 573.5,665.9 573.9,667 574.3,668.1 574.7,669.3 575.1,670.4 575.5,671.5 575.9,672.6 576.4,673.8 576.8,674.9 577.2,676 577.7,677.1 578.1,678.2 578.5,679.4 579,680.5 579.5,681.6 579.9,682.7 580.4,683.8 580.9,684.9 581.3,686 581.8,687.1 582.3,688.2 582.8,689.3 583.3,690.4 583.8,691.5 584.3,692.5 584.8,693.6 585.4,694.7 585.9,695.8 586.4,696.8 587,697.9 587.5,699 588.1,700 588.7,701.1 589.2,702.1 589.8,703.2 590.4,704.2 591,705.3 591.6,706.3 592.2,707.3 592.8,708.4 593.5,709.4 594.1,710.4 594.7,711.4 595.4,712.4 596,713.4 596.7,714.4 597.4,715.4 598,716.4 598.7,717.4 599.4,718.4 600.1,719.3 600.8,720.3 601.6,721.2 602.3,722.2 603,723.1 603.8,724.1 604.5,725 605.3,725.9 606.1,726.9 606.8,727.8 607.6,728.7 608.4,729.6 609.2,730.5 610.1,731.4 610.9,732.3 611.7,733.1 612.6,734 613.4,734.8 614.3,735.7 615.2,736.5 616.1,737.3 617,738.2 617.9,739 618.8,739.7 619.7,740.5 620.6,741.3 621.6,742 622.5,742.8 623.5,743.5 624.4,744.2 625.4,744.9 626.4,745.6 627.4,746.3 628.4,746.9 629.4,747.6 630.4,748.2 631.4,748.8 632.5,749.4 633.5,750 634.5,750.6 635.6,751.1 636.7,751.6 637.7,752.1 638.8,752.7 639.9,753.1 641,753.6 642.1,754.1 643.2,754.5 644.3,755 645.5,755.4 646.6,755.8 647.7,756.2 648.9,756.6 650,757 651.1,757.4 652.3,757.7 653.4,758.1 654.6,758.5 655.7,758.8 656.9,759.2 658.1,759.5 659.2,759.8 660.4,760.1 661.6,760.5 662.8,760.8 663.9,761.1 665.1,761.4 666.3,761.6 667.5,761.9 668.6,762.2 669.8,762.4 671,762.7 672.2,762.9 673.4,763.1 674.6,763.3 675.8,763.4 676.9,763.6 678.1,763.7 679.3,763.8 680.5,763.9 681.7,763.9 682.9,763.9 684.1,763.9 685.2,763.9 686.4,763.8 687.6,763.7 688.8,763.6 690,763.4 691.2,763.2 692.3,763 693.5,762.8 694.7,762.5 695.8,762.2 697,761.8 698.2,761.5 699.3,761.1 700.4,760.7 701.6,760.2 702.7,759.8 703.8,759.3 704.9,758.8 706,758.3 707.1,757.7 708.2,757.1 709.3,756.6 710.3,756 711.4,755.3 712.4,754.7 713.4,754 714.4,753.4 715.4,752.7 716.4,752 717.3,751.3 718.3,750.5 719.2,749.8 720.1,749.1 721,748.3 722,747.5 722.9,746.8 723.8,746 724.7,745.2 725.6,744.4 726.4,743.6 727.3,742.8 728.2,742 729.1,741.2 730,740.4 731,739.6 731.9,738.8 732.8,738 733.7,737.2 734.6,736.4 735.5,735.6 736.4,734.8 737.3,734 738.2,733.1 739.1,732.3 739.9,731.5 740.8,730.7 741.7,729.9 742.5,729.1 743.4,728.3 744.2,727.5 745,726.6 745.8,725.8 746.6,725 747.4,724.2 748.2,723.3 749,722.5 749.8,721.6 750.6,720.8 751.4,719.9 752.3,719 753.1,718.1 753.9,717.2 754.8,716.3 755.7,715.3 756.5,714.4 757.4,713.4 758.3,712.5 759.3,711.5 760.2,710.6 761.2,709.8 762.2,709 763.2,708.3 764.2,707.7 765.2,707.2 766.3,706.9 767.3,706.6 768.4,706.4 769.5,706.4 770.6,706.4 771.7,706.5 772.9,706.6 774,706.9 775.1,707.2 776.3,707.5 777.4,707.9 778.6,708.3 779.8,708.8 780.9,709.3 782.1,709.8 783.3,710.3 784.4,710.9 785.6,711.4 786.7,711.9 787.9,712.4 789.1,712.9 790.2,713.3 791.4,713.7 792.5,714.1 793.6,714.4 794.8,714.7 795.9,714.9 797,715 798.1,715.1 799.2,715 800.3,714.9 801.4,714.7 802.4,714.3 803.5,713.9 804.5,713.5 805.6,713 806.6,712.4 807.7,711.7 808.7,711 809.7,710.3 810.8,709.6 811.8,708.8 812.8,708 813.8,707.2 814.8,706.4 815.9,705.6 816.9,704.9 817.9,704.1 818.9,703.4 820,702.7 821,702 822,701.4 823.1,700.9 824.2,700.4 825.2,699.9 826.3,699.5 827.4,699.2 828.5,698.9 829.6,698.8 830.8,698.6 831.9,698.6 833.1,698.6 834.3,698.8 835.5,698.9 836.7,699.1 837.9,699.4 839.2,699.6 840.4,699.9 841.6,700.2 842.8,700.4 844,700.7 845.2,700.9 846.4,701.1 847.6,701.2 848.8,701.3 849.9,701.3 851.1,701.2 852.2,701 853.4,700.8 854.5,700.5 855.7,700.1 856.8,699.8 858,699.4 859.1,699 860.3,698.6 861.5,698.2 862.6,697.9 863.8,697.5 865,697.2 866.3,697 867.5,696.8 868.7,696.6 869.9,696.5 871.1,696.4 872.3,696.4 873.4,696.5 874.6,696.7 875.7,696.9 876.8,697.2 877.9,697.6 878.9,698.1 879.9,698.7 880.9,699.4 881.9,700.1 882.8,701 883.7,701.9 884.6,702.8 885.4,703.8 886.3,704.8 887.2,705.7 888.1,706.7 888.9,707.6 889.8,708.5 890.7,709.3 891.7,710 892.6,710.6 893.6,711.1 894.7,711.5 895.8,711.8 896.9,711.9 898,711.8 899.1,711.7 900.3,711.5 901.4,711.1 902.4,710.6 903.5,710 904.4,709.4 905.3,708.6 906.2,707.8 907,706.9 907.7,706 908.4,705 909.1,704 909.8,702.9 910.4,701.8 911,700.7 911.6,699.6 912.2,698.5 912.8,697.4 913.4,696.3 914.1,695.2 914.7,694.2 915.4,693.2 916.1,692.2 916.9,691.3 917.7,690.5 918.5,689.6 919.4,688.9 920.3,688.2 921.4,687.6 922.4,687.1 923.6,686.7 924.7,686.4 925.9,686.2 927.1,686.2 928.2,686.4 929.3,686.8 930.2,687.4 931.1,688.3 931.9,689.2 932.6,690.3 933.4,691.4 934.1,692.4 934.9,693.4 935.7,694.4 936.5,695.3 937.3,696.2 938.1,697.1 938.8,698 939.5,698.9 940.1,699.9 940.8,700.9 941.4,701.9 942,702.9 942.6,704 943.1,705 943.8,706.1 944.4,707.1 945,708.1 945.7,709.1 946.5,710.1 947.2,711 948.1,711.9 949,712.8 950,713.6 951,714.3 952.1,714.9 953.1,715.4 954.2,715.8 955.3,716 956.4,716.1 957.5,716 958.5,715.8 959.6,715.4 960.6,714.9 961.6,714.3 962.5,713.5 963.5,712.7 964.4,711.9 965.3,710.9 966.1,709.9 967,708.9 967.8,707.9 968.6,706.8 969.4,705.8 970.2,704.8 971,703.8 971.8,702.8 972.7,701.9 973.5,701 974.4,700.3 975.3,699.6 976.2,699 977.2,698.5 978.3,698.1 979.3,697.9 980.4,697.8 981.6,697.8 982.7,697.8 983.8,698 985,698.3 986.1,698.7 987.2,699.2 988.3,699.7 989.4,700.4 990.4,701.1 991.3,701.9 992.2,702.7 993.1,703.6 994,704.5 994.8,705.4 995.6,706.4 996.4,707.3 997.2,708.3 998,709.2 998.8,710.1 999.6,711 1000.5,711.8 1001.4,712.6 1002.3,713.3 1003.3,713.9 1004.3,714.4 1005.4,714.8 1006.6,715.1 1007.8,715.2 1009,715.3 1010.3,715.2 1011.5,715 1012.8,714.6 1014,714.1 1015.1,713.5 1016.2,712.9 1017.3,712.3 1018.4,711.9 1019.5,711.7 1020.5,711.7 1021.6,712 1022.6,712.5 1023.6,713.2 1024.5,714.1 1025.4,715 1026.3,715.9 1027.1,716.9 1027.8,717.9 1028.6,718.9 1029.2,719.9 1029.9,721 1030.5,722.1 1031,723.2 1031.6,724.3 1032.1,725.4 1032.6,726.5 1033.1,727.6 1033.6,728.7 1034.1,729.8 1034.6,730.9 1035.1,732 1035.6,733.1 1036.1,734.2 1036.6,735.2 1037,736.3 1037.5,737.4 1038,738.4 1038.5,739.5 1039,740.5 1039.6,741.5 1040.1,742.6 1040.6,743.6 1041.2,744.6 1041.7,745.6 1042.3,746.7 1042.9,747.7 1043.5,748.7 1044.1,749.7 1044.8,750.7 1045.4,751.7 1046.1,752.7 1046.8,753.6 1047.6,754.6 1048.3,755.6 1049.1,756.6 1049.9,757.5 1050.7,758.5 1051.6,759.4 1052.5,760.4 1053.4,761.4 1054.3,762.3 1055.3,763.2 1056.2,764.1 1057.2,764.9 1058.3,765.7 1059.3,766.4 1060.3,767 1061.4,767.6 1062.4,768.1 1063.5,768.5 1064.5,768.9 1065.6,769.1 1066.6,769.2 1067.7,769.2 1068.7,769 1069.8,768.7 1070.8,768.4 1071.8,767.9 1072.8,767.4 1073.9,766.8 1074.9,766.1 1075.9,765.4 1076.9,764.7 1078,763.9 1079,763.2 1080,762.4 1081.1,761.7 1082.2,761 1083.2,760.4 1084.3,759.8 1085.5,759.3 1086.6,758.9 1087.7,758.6 1088.9,758.3 1090,758.2 1091.2,758.1 1092.3,758.1 1093.4,758.1 1094.6,758.3 1095.7,758.6 1096.8,758.9 1097.9,759.4 1099,759.9 1100.1,760.5 1101.1,761.3 1102.1,762 1103.2,762.8 1104.2,763.6 1105.2,764.3 1106.3,765 1107.4,765.5 1108.5,766 1109.6,766.4 1110.8,766.7 1111.9,766.9 1113.1,767.1 1114.3,767.2 1115.4,767.2 1116.6,767.1 1117.8,767 1118.9,766.8 1120.1,766.6 1121.3,766.3 1122.4,766 1123.6,765.6 1124.7,765.2 1125.9,764.8 1127,764.3 1128.2,763.8 1129.3,763.4 1130.5,762.9 1131.6,762.4 1132.8,762 1133.9,761.5 1135.1,761.1 1136.2,760.7 1137.4,760.3 1138.5,760 1139.6,759.7 1140.8,759.5 1141.9,759.3 1143.1,759.2 1144.3,759.2 1145.4,759.2 1146.6,759.3 1147.7,759.5 1148.9,759.7 1150.1,760 1151.2,760.3 1152.4,760.6 1153.6,761 1154.7,761.4 1155.9,761.8 1157.1,762.2 1158.2,762.7 1159.4,763.1 1160.6,763.5 1161.8,763.9 1162.9,764.3 1164.1,764.7 1165.3,765 1166.5,765.3 1167.6,765.6 1168.8,765.8 1170,765.9 1171.2,766 1172.3,766 1173.5,766 1174.7,765.8 1175.8,765.7 1177,765.4 1178.2,765.2 1179.3,764.8 1180.5,764.5 1181.7,764.1 1182.8,763.7 1184,763.3 1185.2,762.9 1186.3,762.4 1187.5,762 1188.7,761.6 1189.8,761.2 1191,760.7 1192.2,760.4 1193.3,760 1194.5,759.7 1195.7,759.4 1196.8,759.2 1198,759 1199.2,758.9 1200.3,758.9 1201.5,758.9 1202.7,758.9 1203.9,759 1205.1,759.2 1206.2,759.4 1207.4,759.6 1208.6,759.9 1209.8,760.2 1210.9,760.5 1212.1,760.8 1213.3,761.2 1214.5,761.5 1215.7,761.9 1216.9,762.2 1218,762.6 1219.2,762.9 1220.4,763.2 1221.6,763.5 1222.8,763.8 1224,764.1 1225.1,764.3 1226.3,764.5 1227.5,764.6 1228.7,764.7 1229.9,764.7 1231.1,764.7 1232.2,764.7 1233.4,764.7 1234.6,764.6 1235.8,764.5 1237,764.3 1238.2,764.2 1239.3,764 1240.5,763.8 1241.7,763.6 1242.9,763.4 1244.1,763.2 1245.3,763 1246.4,762.8 1247.6,762.5 1248.8,762.3 1250,762.1 1251.2,761.9 1252.4,761.8 1253.6,761.6 1254.8,761.5 1256,761.4 1257.1,761.3 1258.3,761.2 1259.5,761.1 1260.7,761.1 1261.9,761.1 1263.1,761.1 1264.3,761.1 1265.5,761.1 1266.7,761.1 1267.9,761.1 1269.1,761.2 1270.3,761.2 1271.5,761.3 1272.7,761.4 1273.9,761.4 1275.1,761.5 1276.3,761.6 1277.5,761.6 1278.7,761.7 1279.9,761.7 1281.1,761.8 1282.3,761.8 1283.5,761.9 1284.7,761.9 1285.9,762 1287.1,762 1288.3,762 1289.5,762 1290.7,762 1291.9,761.9 1293,761.9 1294.2,761.9 1295.4,761.9 1296.6,761.8 1297.8,761.8 1299,761.7 1300.2,761.7 1301.4,761.7 1302.6,761.6 1303.8,761.6 1305,761.6 1306.2,761.5 1307.4,761.5 1308.6,761.5 1309.8,761.5 1311,761.5 1312.3,761.5 1313.5,761.5 1314.7,761.6 1315.9,761.6 1317.1,761.6 1318.3,761.6 1319.5,761.6 1320.7,761.7 1322,761.7 1323.2,761.7 1324.4,761.7 1325.6,761.7 1326.8,761.7 1328,761.7 1329.2,761.6 1330.4,761.6 1331.6,761.5 1332.8,761.5 1334,761.4 1335.2,761.3 1336.3,761.2 1337.5,761.1 1338.7,760.9 1339.9,760.8 1341.1,760.6 1342.2,760.5 1343.4,760.3 1344.6,760.1 1345.8,759.9 1346.9,759.6 1348.1,759.4 1349.3,759.2 1350.4,758.9 1351.6,758.7 1352.7,758.4 1353.9,758.1 1355.1,757.9 1356.2,757.6 1357.4,757.3 1358.5,757 1359.7,756.7 1360.9,756.3 1362,756 1363.2,755.7 1364.3,755.4 1365.5,755 1366.7,754.7 1367.8,754.3 1369,754 1370.1,753.6 1371.3,753.2 1372.4,752.8 1373.6,752.4 1374.7,752 1375.9,751.6 1377,751.2 1378.2,750.8 1379.3,750.3 1380.4,749.9 1381.5,749.4 1382.7,749 1383.8,748.5 1384.9,748 1386,747.5 1387.1,747 1388.2,746.5 1389.3,746 1390.3,745.4 1391.4,744.9 1392.5,744.3 1393.5,743.7 1394.5,743.2 1395.6,742.5 1396.6,741.9 1397.6,741.3 1398.6,740.7 1399.6,740 1400.6,739.3 1401.6,738.7 1402.6,738 1403.5,737.3 1404.5,736.6 1405.4,735.9 1406.4,735.1 1407.3,734.4 1408.2,733.6 1409.2,732.9 1410.1,732.1 1411,731.3 1411.9,730.5 1412.7,729.7 1413.6,728.9 1414.5,728.1 1415.3,727.2 1416.2,726.4 1417,725.5 1417.8,724.7 1418.7,723.8 1419.5,722.9 1420.3,722 1421.1,721.1 1421.9,720.2 1422.7,719.3 1423.4,718.4 1424.2,717.5 1424.9,716.5 1425.7,715.6 1426.4,714.7 1427.2,713.7 1427.9,712.7 1428.6,711.8 1429.3,710.8 1430,709.8 1430.7,708.8 1431.4,707.8 1432.1,706.8 1432.7,705.8 1433.4,704.8 1434,703.8 1434.7,702.8 1435.3,701.7 1435.9,700.7 1436.6,699.7 1437.2,698.6 1437.8,697.6 1438.4,696.5 1439,695.5 1439.5,694.4 1440.1,693.4 1440.7,692.3 1441.2,691.2 1441.8,690.2 1442.3,689.1 1442.9,688 1443.4,686.9 1443.9,685.8 1444.4,684.7 1444.9,683.6 1445.4,682.6 1445.9,681.5 1446.4,680.4 1446.8,679.3 1447.3,678.2 1447.8,677 1448.2,675.9 1448.7,674.8 1449.1,673.7 1449.5,672.6 1450,671.5 1450.4,670.4 1450.8,669.2 1451.2,668.1 1451.6,667 1452,665.8 1452.4,664.7 1452.8,663.6 1453.2,662.4 1453.5,661.3 1453.9,660.2 1454.3,659 1454.6,657.9 1455,656.7 1455.3,655.6 1455.7,654.5 1456,653.3 1456.4,652.2 1456.7,651 1457,649.8 1457.3,648.7 1457.7,647.5 1458,646.4 1458.3,645.2 1458.6,644.1 1458.9,642.9 1459.2,641.7 1459.5,640.6 1459.8,639.4 1460.1,638.2 1460.4,637.1 1460.7,635.9 1460.9,634.7 1461.2,633.6 1461.5,632.4 1461.8,631.2 1462,630.1 1462.3,628.9 1462.6,627.7 1462.8,626.5 1463.1,625.4 1463.4,624.2 1463.6,623 1463.9,621.9 1464.1,620.7 1464.4,619.5 1464.6,618.3 1464.9,617.2 1465.1,616 1465.4,614.8 1465.6,613.6 1465.9,612.5 1466.1,611.3 1466.4,610.1 1466.6,608.9 1466.9,607.8 1467.1,606.6 1467.3,605.4 1467.6,604.2 1467.8,603 1468,601.9 1468.3,600.7 1468.5,599.5 1468.7,598.3 1469,597.2 1469.2,596 1469.4,594.8 1469.6,593.6 1469.9,592.4 1470.1,591.3 1470.3,590.1 1470.5,588.9 1470.7,587.7 1471,586.5 1471.2,585.4 1471.4,584.2 1471.6,583 1471.8,581.8 1472,580.6 1472.2,579.4 1472.4,578.3 1472.7,577.1 1472.9,575.9 1473.1,574.7 1473.3,573.5 1473.5,572.4 1473.7,571.2 1473.9,570 1474.1,568.8 1474.3,567.6 1474.5,566.4 1474.7,565.3 1474.9,564.1 1475.1,562.9 1475.3,561.7 1475.4,560.5 1475.6,559.3 1475.8,558.2 1476,557 1476.2,555.8 1476.4,554.6 1476.6,553.4 1476.8,552.2 1476.9,551 1477.1,549.9 1477.3,548.7 1477.5,547.5 1477.7,546.3 1477.9,545.1 1478,543.9 1478.2,542.7 1478.4,541.6 1478.6,540.4 1478.7,539.2 1478.9,538 1479.1,536.8 1479.3,535.6 1479.4,534.4 1479.6,533.2 1479.8,532.1 1480,530.9 1480.1,529.7 1480.3,528.5 1480.5,527.3 1480.6,526.1 1480.8,524.9 1481,523.7 1481.1,522.6 1481.3,521.4 1481.4,520.2 1481.6,519 1481.8,517.8 1481.9,516.6 1482.1,515.4 1482.3,514.2 1482.4,513 1482.6,511.8 1482.7,510.7 1482.9,509.5 1483,508.3 1483.2,507.1 1483.4,505.9 1483.5,504.7 1483.7,503.5 1483.8,502.3 1484,501.1 1484.1,499.9 1484.3,498.8 1484.4,497.6 1484.6,496.4 1484.7,495.2 1484.9,494 1485,492.8 1485.2,491.6 1485.3,490.4 1485.5,489.2 1485.6,488 1485.8,486.8 1485.9,485.7 1486.1,484.5 1486.2,483.3 1486.3,482.1 1486.5,480.9 1486.6,479.7 1486.8,478.5 1486.9,477.3 1487.1,476.1 1487.2,474.9 1487.3,473.7 1487.5,472.5 1487.6,471.3 1487.8,470.2 1487.9,469 1488,467.8 1488.2,466.6 1488.3,465.4 1488.5,464.2 1488.6,463 1488.7,461.8 1488.9,460.6 1489,459.4 1489.2,458.2 1489.3,457 1489.4,455.8 1489.6,454.6 1489.7,453.5 1489.8,452.3 1490,451.1 1490.1,449.9 1490.2,448.7 1490.4,447.5 1490.5,446.3 1490.7,445.1 1490.8,443.9 1490.9,442.7 1491.1,441.5 1491.2,440.3 1491.3,439.1 1491.5,437.9 1491.6,436.7 1491.7,435.6 1491.9,434.4 1492,433.2 1492.1,432 1492.3,430.8 1492.4,429.6 1492.5,428.4 1492.7,427.2 1492.8,426 1492.9,424.8 1493.1,423.6 1493.2,422.4 1493.3,421.2 1493.5,420 1493.6,418.8 1493.7,417.7 1493.9,416.5 1494,415.3 1494.1,414.1 1494.3,412.9 1494.4,411.7 1494.5,410.5 1494.7,409.3 1494.8,408.1 1494.9,406.9 1495.1,405.7 1495.2,404.5 1495.3,403.3 1495.5,402.1 1495.6,400.9 1495.7,399.7 1495.9,398.5 1496,397.4 1496.1,396.2 1496.2,395 1496.4,393.8 1496.5,392.6 1496.6,391.4 1496.8,390.2 1496.9,389 1497,387.8 1497.2,386.6 1497.3,385.4 1497.4,384.2 1497.6,383 1497.7,381.8 1497.8,380.6 1498,379.5 1498.1,378.3 1498.2,377.1 1498.4,375.9 1498.5,374.7 1498.6,373.5 1498.8,372.3 1498.9,371.1 1499,369.9 1499.2,368.7 1499.3,367.5 1499.4,366.3 1499.5,365.1 1499.7,363.9 1499.8,362.7 1499.9,361.5 1500.1,360.4 1500.2,359.2 1500.3,358 1500.5,356.8 1500.6,355.6 1500.7,354.4 1500.9,353.2 1501,352 1501.1,350.8 1501.3,349.6 1501.4,348.4 1501.5,347.2 1501.7,346 1501.8,344.8 1501.9,343.7 1502.1,342.5 1502.2,341.3 1502.3,340.1 1502.5,338.9 1502.6,337.7 1502.7,336.5 1502.9,335.3 1503,334.1 1503.1,332.9 1503.3,331.7 1503.4,330.5 1503.5,329.3 1503.7,328.1 1503.8,327 1504,325.8 1504.1,324.6 1504.2,323.4 1504.4,322.2 1504.5,321 1504.6,319.8 1504.8,318.6 1504.9,317.4 1505,316.2 1505.2,315 1505.3,313.8 1505.4,312.7 1505.6,311.5 1505.7,310.3 1505.9,309.1 1506,307.9 1506.1,306.7 1506.3,305.5 1506.4,304.3 1506.5,303.1 1506.7,301.9 1506.8,300.7 1507,299.6 1507.1,298.4 1507.2,297.2 1507.4,296 1507.5,294.8 1507.7,293.6 1507.8,292.4 1507.9,291.2 1508.1,290 1508.2,288.8 1508.4,287.6 1508.5,286.5 1508.6,285.3 1508.8,284.1 1508.9,282.9 1509.1,281.7 1509.2,280.5 1509.3,279.3 1509.5,278.1 1509.6,276.9 1509.8,275.7 1509.9,274.6 1510.1,273.4 1510.2,272.2 1510.3,271 1510.5,269.8 1510.6,268.6 1510.8,267.4 1510.9,266.2 1511.1,265 1511.2,263.9 1511.4,262.7 1511.5,261.5 1511.7,260.3 1511.8,259.1 1512,257.9 1512.2,256.7 1512.3,255.5 1512.5,254.4 1512.7,253.2 1512.9,252 1513.1,250.8 1513.3,249.6 1513.6,248.4 1513.8,247.2 1514.1,246.1 1514.3,244.9 1514.6,243.7 1514.9,242.5 1515.2,241.3 1515.5,240.1 1515.8,239 1516.2,237.8 1516.5,236.6 1516.9,235.4 1517.3,234.2 1517.7,233.1 1518.1,231.9 1518.6,230.7 1519,229.5 1519.5,228.4 1520.1,227.5 1520.6,226.9 1521.3,226.7 1522,227 1522.7,227.7 1523.4,228.7 1524.1,229.8 1524.7,231 1525.3,232.2 1525.8,233.4 1526.2,234.6 1526.6,235.7 1526.9,236.9 1527.2,238.1 1527.4,239.3 1527.6,240.5 1527.8,241.6 1528,242.8 1528.1,244 1528.2,245.2 1528.4,246.3 1528.5,247.5 1528.6,248.7 1528.7,249.9 1528.9,251.1 1529,252.3 1529.1,253.4 1529.3,254.6 1529.4,255.8 1529.6,257 1529.7,258.2 1529.8,259.4 1530,260.6 1530.1,261.8 1530.3,263 1530.4,264.1 1530.6,265.3 1530.7,266.5 1530.9,267.7 1531,268.9 1531.2,270.1 1531.4,271.3 1531.5,272.5 1531.7,273.7 1531.8,274.9 1532,276.1 1532.1,277.3 1532.3,278.5 1532.4,279.7 1532.5,280.9 1532.7,282.1 1532.8,283.3 1533,284.4 1533.1,285.6 1533.3,286.8 1533.4,288 1533.5,289.2 1533.7,290.4 1533.8,291.6 1533.9,292.8 1534.1,294 1534.2,295.2 1534.4,296.4 1534.5,297.6 1534.6,298.8 1534.8,300 1534.9,301.2 1535,302.3 1535.1,303.5 1535.3,304.7 1535.4,305.9 1535.5,307.1 1535.7,308.3 1535.8,309.5 1535.9,310.7 1536,311.9 1536.2,313.1 1536.3,314.3 1536.4,315.5 1536.5,316.7 1536.7,317.9 1536.8,319.1 1536.9,320.2 1537,321.4 1537.2,322.6 1537.3,323.8 1537.4,325 1537.5,326.2 1537.6,327.4 1537.8,328.6 1537.9,329.8 1538,331 1538.1,332.2 1538.2,333.4 1538.3,334.6 1538.5,335.8 1538.6,337 1538.7,338.1 1538.8,339.3 1538.9,340.5 1539,341.7 1539.1,342.9 1539.3,344.1 1539.4,345.3 1539.5,346.5 1539.6,347.7 1539.7,348.9 1539.8,350.1 1539.9,351.3 1540.1,352.5 1540.2,353.7 1540.3,354.9 1540.4,356.1 1540.5,357.3 1540.6,358.5 1540.7,359.6 1540.8,360.8 1540.9,362 1541.1,363.2 1541.2,364.4 1541.3,365.6 1541.4,366.8 1541.5,368 1541.6,369.2 1541.7,370.4 1541.8,371.6 1541.9,372.8 1542.1,374 1542.2,375.2 1542.3,376.4 1542.4,377.6 1542.5,378.8 1542.6,380 1542.7,381.2 1542.8,382.4 1543,383.6 1543.1,384.8 1543.2,386 1543.3,387.2 1543.4,388.3 1543.5,389.5 1543.6,390.7 1543.7,391.9 1543.9,393.1 1544,394.3 1544.1,395.5 1544.2,396.7 1544.3,397.9 1544.4,399.1 1544.6,400.3 1544.7,401.5 1544.8,402.7 1544.9,403.9 1545,405.1 1545.1,406.3 1545.3,407.5 1545.4,408.7 1545.5,409.9 1545.6,411.1 1545.8,412.3 1545.9,413.5 1546,414.6 1546.1,415.8 1546.3,417 1546.4,418.2 1546.5,419.4 1546.6,420.6 1546.8,421.8 1546.9,423 1547,424.2 1547.2,425.4 1547.3,426.6 1547.4,427.8 1547.5,429 1547.7,430.2 1547.8,431.4 1548,432.6 1548.1,433.7 1548.2,434.9 1548.4,436.1 1548.5,437.3 1548.6,438.5 1548.8,439.7 1548.9,440.9 1549.1,442.1 1549.2,443.3 1549.4,444.5 1549.5,445.7 1549.7,446.9 1549.8,448 1550,449.2 1550.1,450.4 1550.3,451.6 1550.4,452.8 1550.6,454 1550.7,455.2 1550.9,456.4 1551,457.6 1551.2,458.7 1551.4,459.9 1551.5,461.1 1551.7,462.3 1551.8,463.5 1552,464.7 1552.2,465.9 1552.3,467.1 1552.5,468.3 1552.7,469.4 1552.8,470.6 1553,471.8 1553.2,473 1553.3,474.2 1553.5,475.4 1553.7,476.6 1553.8,477.8 1554,478.9 1554.2,480.1 1554.4,481.3 1554.5,482.5 1554.7,483.7 1554.9,484.9 1555,486.1 1555.2,487.2 1555.4,488.4 1555.6,489.6 1555.8,490.8 1555.9,492 1556.1,493.2 1556.3,494.4 1556.5,495.5 1556.7,496.7 1556.8,497.9 1557,499.1 1557.2,500.3 1557.4,501.5 1557.6,502.7 1557.7,503.8 1557.9,505 1558.1,506.2 1558.3,507.4 1558.5,508.6 1558.7,509.8 1558.9,511 1559,512.1 1559.2,513.3 1559.4,514.5 1559.6,515.7 1559.8,516.9 1560,518.1 1560.2,519.3 1560.4,520.4 1560.5,521.6 1560.7,522.8 1560.9,524 1561.1,525.2 1561.3,526.4 1561.5,527.6 1561.7,528.7 1561.9,529.9 1562.1,531.1 1562.3,532.3 1562.5,533.5 1562.7,534.7 1562.8,535.9 1563,537 1563.2,538.2 1563.4,539.4 1563.6,540.6 1563.8,541.8 1564,543 1564.2,544.2 1564.4,545.4 1564.6,546.5 1564.8,547.7 1565,548.9 1565.2,550.1 1565.4,551.3 1565.6,552.5 1565.8,553.7 1566,554.8 1566.2,556 1566.4,557.2 1566.6,558.4 1566.8,559.6 1567,560.8 1567.2,562 1567.4,563.1 1567.6,564.3 1567.8,565.5 1568,566.7 1568.2,567.9 1568.4,569.1 1568.6,570.3 1568.8,571.4 1569,572.6 1569.2,573.8 1569.4,575 1569.6,576.2 1569.8,577.4 1570,578.5 1570.3,579.7 1570.5,580.9 1570.7,582.1 1570.9,583.3 1571.1,584.5 1571.3,585.6 1571.6,586.8 1571.8,588 1572,589.2 1572.2,590.4 1572.4,591.5 1572.7,592.7 1572.9,593.9 1573.1,595.1 1573.3,596.3 1573.6,597.4 1573.8,598.6 1574,599.8 1574.3,601 1574.5,602.1 1574.7,603.3 1575,604.5 1575.2,605.7 1575.5,606.8 1575.7,608 1576,609.2 1576.2,610.4 1576.4,611.5 1576.7,612.7 1576.9,613.9 1577.2,615.1 1577.5,616.2 1577.7,617.4 1578,618.6 1578.2,619.7 1578.5,620.9 1578.8,622.1 1579,623.3 1579.3,624.4 1579.6,625.6 1579.8,626.8 1580.1,627.9 1580.4,629.1 1580.7,630.2 1580.9,631.4 1581.2,632.6 1581.5,633.7 1581.8,634.9 1582.1,636.1 1582.4,637.2 1582.7,638.4 1583,639.5 1583.3,640.7 1583.6,641.8 1583.9,643 1584.2,644.2 1584.5,645.3 1584.9,646.5 1585.2,647.6 1585.5,648.8 1585.8,649.9 1586.2,651.1 1586.5,652.2 1586.9,653.4 1587.2,654.5 1587.6,655.6 1587.9,656.8 1588.3,657.9 1588.6,659.1 1589,660.2 1589.4,661.3 1589.7,662.5 1590.1,663.6 1590.5,664.7 1590.9,665.9 1591.3,667 1591.7,668.1 1592.1,669.3 1592.5,670.4 1592.9,671.5 1593.3,672.6 1593.8,673.8 1594.2,674.9 1594.6,676 1595.1,677.1 1595.5,678.2 1595.9,679.4 1596.4,680.5 1596.9,681.6 1597.3,682.7 1597.8,683.8 1598.3,684.9 1598.8,686 1599.3,687.1 1599.7,688.2 1600.2,689.3 1600.8,690.4 1601.3,691.5 1601.8,692.6 1602.3,693.7 1602.8,694.8 1603.4,695.9 1603.9,697 1604.5,698 1605,699.1 1605.6,700.2 1606.2,701.3 1606.8,702.3 1607.3,703.4 1607.9,704.5 1608.5,705.5 1609.1,706.6 1609.8,707.6 1610.4,708.6 1611,709.7 1611.6,710.7 1612.3,711.7 1612.9,712.7 1613.6,713.8 1614.3,714.8 1614.9,715.8 1615.6,716.8 1616.3,717.7 1617,718.7 1617.7,719.7 1618.5,720.7 1619.2,721.6 1619.9,722.6 1620.7,723.5 1621.4,724.4 1622.2,725.4 1622.9,726.3 1623.7,727.2 1624.5,728.1 1625.3,729 1626.1,729.8 1626.9,730.7 1627.7,731.6 1628.6,732.4 1629.4,733.3 1630.3,734.1 1631.1,734.9 1632,735.7 1632.9,736.5 1633.8,737.3 1634.7,738.1 1635.6,738.8 1636.5,739.6 1637.4,740.3 1638.4,741 1639.3,741.7 1640.3,742.4 1641.2,743.1 1642.2,743.8 1643.2,744.5 1644.2,745.1 1645.2,745.7 1646.2,746.4 1647.3,747 1648.3,747.6 1649.3,748.2 1650.4,748.8 1651.5,749.3 1652.5,749.9 1653.6,750.4 1654.7,751 1655.8,751.5 1656.8,752 1657.9,752.6 1659,753.1 1660.1,753.6 1661.3,754.1 1662.4,754.6 1663.5,755 1664.6,755.5 1665.7,756 1666.9,756.4 1668,756.9 1669.1,757.3 1670.2,757.8 1671.4,758.2 1672.5,758.6 1673.7,759 1674.8,759.4 1676,759.8 1677.1,760.2 1678.3,760.6 1679.4,760.9 1680.6,761.3 1681.7,761.6 1682.9,761.9 1684,762.2 1685.2,762.4 1686.4,762.7 1687.5,762.9 1688.7,763.1 1689.9,763.3 1691.1,763.4 1692.2,763.6 1693.4,763.7 1694.6,763.8 1695.8,763.9 1697,763.9 1698.2,764 1699.3,764 1700.5,764 1701.7,763.9 1702.9,763.9 1704.1,763.8 1705.3,763.7 1706.5,763.6 1707.7,763.5 1708.8,763.3 1710,763.1 1711.2,763 1712.4,762.7 1713.6,762.5 1714.7,762.3 1715.9,762 1717.1,761.7 1718.3,761.4 1719.4,761.1 1720.6,760.7 1721.8,760.4 1722.9,760 1724.1,759.6 1725.2,759.2 1726.4,758.8 1727.5,758.3 1728.6,757.8 1729.7,757.3 1730.8,756.8 1731.9,756.3 1733,755.7 1734,755.1 1735.1,754.5 1736.1,753.9 1737.1,753.3 1738.1,752.6 1739.1,751.9 1740.1,751.2 1741,750.5 1741.9,749.8 1742.9,749 1743.7,748.2 1744.6,747.4 1745.5,746.6 1746.4,745.8 1747.2,744.9 1748,744.1 1748.9,743.2 1749.7,742.3 1750.5,741.5 1751.3,740.6 1752,739.6 1752.8,738.7 1753.6,737.8 1754.4,736.9 1755.1,735.9 1755.9,735 1756.7,734.1 1757.4,733.1 1758.2,732.2 1758.9,731.2 1759.7,730.3 1760.5,729.4 1761.2,728.4 1762,727.5 1762.8,726.5 1763.5,725.6 1764.3,724.7 1765.1,723.8 1765.9,722.9 1766.7,722 1767.5,721.1 1768.3,720.2 1769.2,719.4 1770,718.5 1770.9,717.7 1771.8,716.9 1772.6,716.1 1773.5,715.3 1774.5,714.6 1775.4,713.8 1776.3,713.1 1777.3,712.4 1778.3,711.7 1779.3,711 1780.3,710.4 1781.4,709.8 1782.5,709.2 1783.5,708.7 1784.6,708.1 1785.8,707.7 1786.9,707.3 1788,706.9 1789.2,706.6 1790.3,706.4 1791.4,706.2 1792.6,706.2 1793.7,706.2 1794.9,706.3 1796,706.4 1797.1,706.7 1798.2,707.1 1799.3,707.5 1800.4,708.1 1801.5,708.6 1802.6,709.2 1803.7,709.9 1804.8,710.6 1805.9,711.2 1807,711.9 1808.1,712.5 1809.2,713.2 1810.3,713.7 1811.4,714.3 1812.5,714.7 1813.7,715.1 1814.8,715.4 1816,715.6 1817.1,715.7 1818.3,715.7 1819.5,715.7 1820.6,715.6 1821.8,715.4 1822.9,715.1 1824,714.7 1825.1,714.3 1826.2,713.8 1827.3,713.2 1828.3,712.5 1829.3,711.8 1830.3,711.1 1831.3,710.2 1832.2,709.4 1833.1,708.5 1834,707.6 1834.9,706.7 1835.8,705.8 1836.7,704.9 1837.6,704 1838.5,703.2 1839.5,702.3 1840.4,701.6 1841.3,700.9 1842.3,700.3 1843.3,699.7 1844.3,699.3 1845.4,698.9 1846.5,698.6 1847.6,698.5 1848.7,698.4 1849.9,698.4 1851.1,698.4 1852.3,698.5 1853.5,698.7 1854.7,698.9 1855.9,699.1 1857.2,699.3 1858.4,699.5 1859.6,699.8 1860.8,700 1862,700.2 1863.2,700.4 1864.4,700.5 1865.6,700.7 1866.8,700.8 1867.9,700.8 1869.1,700.8 1870.2,700.8 1871.3,700.7 1872.5,700.6 1873.6,700.5 1874.8,700.3 1875.9,700.1 1877,699.8 1878.2,699.5 1879.3,699.1 1880.5,698.7 1881.7,698.3 1882.8,697.8 1884,697.4 1885.2,697 1886.3,696.6 1887.5,696.2 1888.7,695.9 1889.9,695.7 1891,695.5 1892.2,695.5 1893.3,695.5 1894.5,695.7 1895.6,696 1896.7,696.4 1897.8,697 1898.9,697.8 1900,698.8"/></defs>
  <g stroke="#c3ced4" stroke-width="1" stroke-dasharray="3 3" fill="none" shape-rendering="crispEdges"><line x1="41.5" y1="122.5" x2="41.5" y2="852.5"/><line x1="227.5" y1="122.5" x2="227.5" y2="852.5"/><line x1="413.5" y1="122.5" x2="413.5" y2="852.5"/><line x1="599.5" y1="122.5" x2="599.5" y2="852.5"/><line x1="785.5" y1="122.5" x2="785.5" y2="852.5"/><line x1="971.5" y1="122.5" x2="971.5" y2="852.5"/><line x1="1157.5" y1="122.5" x2="1157.5" y2="852.5"/><line x1="1343.5" y1="122.5" x2="1343.5" y2="852.5"/><line x1="1528.5" y1="122.5" x2="1528.5" y2="852.5"/><line x1="1714.5" y1="122.5" x2="1714.5" y2="852.5"/><line x1="1900.5" y1="122.5" x2="1900.5" y2="852.5"/><line x1="41.5" y1="122.5" x2="1900.5" y2="122.5"/><line x1="41.5" y1="195.5" x2="1900.5" y2="195.5"/><line x1="41.5" y1="268.5" x2="1900.5" y2="268.5"/><line x1="41.5" y1="341.5" x2="1900.5" y2="341.5"/><line x1="41.5" y1="414.5" x2="1900.5" y2="414.5"/><line x1="41.5" y1="487.5" x2="1900.5" y2="487.5"/><line x1="41.5" y1="560.5" x2="1900.5" y2="560.5"/><line x1="41.5" y1="633.5" x2="1900.5" y2="633.5"/><line x1="41.5" y1="706.5" x2="1900.5" y2="706.5"/><line x1="41.5" y1="779.5" x2="1900.5" y2="779.5"/><line x1="41.5" y1="852.5" x2="1900.5" y2="852.5"/></g>
  <!-- axis labels -->
  <g fill="#1c1c50"><text x="40.2" y="126.1" text-anchor="end">100.0</text><text x="40.2" y="199.1" text-anchor="end">87.5</text><text x="40.2" y="272.1" text-anchor="end">75.0</text><text x="40.2" y="345.1" text-anchor="end">62.5</text><text x="40.2" y="418.1" text-anchor="end">50.0</text><text x="40.2" y="491.1" text-anchor="end">37.5</text><text x="40.2" y="564.1" text-anchor="end">25.0</text><text x="40.2" y="637.1" text-anchor="end">12.5</text><text x="40.2" y="710.1" text-anchor="end">0.0</text><text x="40.2" y="783.1" text-anchor="end">-12.5</text><text x="40.2" y="856.1" text-anchor="end">-25.0</text><text x="39" y="145" text-anchor="end" textLength="14.5" lengthAdjust="spacingAndGlyphs">psi</text></g>
  <g fill="#111"><text x="41.5" y="871" text-anchor="middle">400.0</text><text x="227.5" y="871" text-anchor="middle">420.0</text><text x="413.5" y="871" text-anchor="middle">440.0</text><text x="599.5" y="871" text-anchor="middle">460.0</text><text x="785.5" y="871" text-anchor="middle">480.0</text><text x="971.5" y="871" text-anchor="middle">500.0</text><text x="1157.5" y="871" text-anchor="middle">520.0</text><text x="1343.5" y="871" text-anchor="middle">540.0</text><text x="1528.5" y="871" text-anchor="middle">560.0</text><text x="1714.5" y="871" text-anchor="middle">580.0</text><text x="1900.5" y="871" text-anchor="middle">600.0</text><text x="43.6" y="889" textLength="14.3" lengthAdjust="spacingAndGlyphs">ms</text></g>
  <!-- waveform -->
  <g fill="none" stroke="#0a0a66" stroke-width="1.2" stroke-linejoin="round">
    <use href="#wv"/><use href="#wv" transform="translate(0,-1.05)"/><use href="#wv" transform="translate(0,1.05)"/>
  </g>
  <!-- stray marks -->
  <ellipse cx="371" cy="242.3" rx="3" ry="2.6" fill="#3c4c9c"/>
  <ellipse cx="389.3" cy="726.3" rx="3" ry="2" transform="rotate(-35 389.3 726.3)" fill="#4652a6"/>
  <!-- blue bar -->
  <rect x="476.3" y="116" width="4.8" height="370" rx="1.6" fill="#4545bd"/>
  <rect x="475.2" y="482" width="4.8" height="366" fill="#4545bd"/>
  <!-- rulers -->
  <g stroke="#000" stroke-width="1" stroke-dasharray="18 6" shape-rendering="crispEdges">
    <line x1="-14" y1="221.5" x2="1901" y2="221.5"/>
    <line x1="503.5" y1="122.5" x2="503.5" y2="852" stroke-dashoffset="7.5"/>
    <line x1="758.5" y1="122.5" x2="758.5" y2="852" stroke-dashoffset="7.5"/>
    <line x1="1012.5" y1="122.5" x2="1012.5" y2="852" stroke-dashoffset="7.5"/>
    <line x1="1267.5" y1="122.5" x2="1267.5" y2="852" stroke-dashoffset="7.5"/>
    <line x1="1521.5" y1="122.5" x2="1521.5" y2="852" stroke-dashoffset="7.5"/>
  </g>
  <circle cx="503.5" cy="852" r="5" fill="#178080" stroke="#0e5a5a"/>
  <circle cx="1521.5" cy="852" r="5" fill="#178080" stroke="#0e5a5a"/>
  <!-- ruler handles -->
  <rect x="3" y="119" width="9" height="9" fill="#1212e0" stroke="#00007c"/>
  <rect x="3" y="217" width="9" height="9" fill="#1212d8" stroke="#00007c"/>
  <rect x="37.5" y="848.5" width="8" height="8" fill="#fff" stroke="#000"/>
  <!-- phase labels -->
  <g fill="#f1f1f1" stroke="#8a8a8a" shape-rendering="crispEdges">
    <rect x="488.5" y="862.5" width="29" height="19"/><rect x="743.5" y="862.5" width="29" height="19"/><rect x="997.5" y="862.5" width="29" height="19"/><rect x="1252.5" y="862.5" width="29" height="19"/><rect x="1506.5" y="862.5" width="29" height="19"/>
  </g>
  <g fill="#111" text-anchor="middle">
    <text x="503" y="876">0°</text><text x="758" y="876">90°</text><text x="1012" y="876">180°</text><text x="1267" y="876">270°</text><text x="1521" y="876">360°</text>
  </g>
  <!-- x1.0 -->
  <rect x="5" y="878" width="35" height="13" fill="#8585f5"/>
  <text x="14" y="888.3" fill="#fff" font-size="10" textLength="15" lengthAdjust="spacingAndGlyphs">x1.0</text>
</svg>
<!--REST_BEGIN-->
<!-- window edges -->
<div class="abs" style="left:0;top:23px;width:1px;height:1009px;background:#8a8a8a"></div>
<div class="abs" style="left:1919px;top:23px;width:1px;height:1009px;background:#8a8a8a"></div>
<!-- ================= GRAPH OVERLAYS ================= -->
<!-- ruler legend -->
<div class="abs" style="left:800px;top:112px;width:320px;height:37px;background:#a0a0a0;border:1px solid #929292;box-shadow:inset 0 0 0 1px #fdfdfd">
  <div class="t" style="left:23px;top:4px;color:#fff;font-size:12.5px">1</div>
  <div class="t" style="left:122.4px;top:4px;color:#fff;font-size:12.5px">2</div>
  <div class="t"  style="left:222.4px;top:4px;color:#fff;font-size:12.5px;transform-origin:0 0;transform:scaleX(0.9331)">Δ</div>
  <div class="abs" style="left:116px;top:3px;width:1px;height:14px;background:#f4f4f4"></div>
  <div class="abs" style="left:216px;top:3px;width:1px;height:14px;background:#f4f4f4"></div>
  <div class="abs" style="left:288px;top:11px;width:7px;height:3px;background:#fff"></div>
  <svg class="abs" style="left:303px;top:3px" width="12" height="12" viewBox="0 0 12 12"><path d="M1.5,1.500L10.500,11M10.500,1.500L1.500,11" stroke="#fff" stroke-width="1.700"/></svg>
  <div class="abs" style="left:17px;top:18px;width:99px;height:16px;background:#fff"></div>
  <div class="abs" style="left:117px;top:18px;width:99px;height:16px;background:#fff"></div>
  <div class="abs" style="left:217px;top:18px;width:100px;height:16px;background:#fff"></div>
  <div class="abs" style="left:6px;top:23px;width:6px;height:6px;background:#15157e"></div>
  <div class="t"  style="left:20.25px;top:20px;font-size:12.5px;transform-origin:0 0;transform:scaleX(0.8751)">83.02 psi</div>
  <div class="t"  style="left:120.6px;top:20px;font-size:12.5px;transform-origin:0 0;transform:scaleX(1.0683)">--.--</div>
  <div class="t"  style="left:220.6px;top:20px;font-size:12.5px;transform-origin:0 0;transform:scaleX(1.0683)">--.--</div>
</div>
<!-- zoom overview -->
<div class="abs" style="left:1730px;top:650px;width:139px;height:21px;background:#9d9d9d;border:1px solid #949494;box-shadow:inset 0 0 0 1px #fbfbfb">
  <div class="t"  style="left:2.7px;top:3px;color:#fff;font-weight:bold;font-size:12px;transform-origin:0 0;transform:scaleX(1.0025)">Zoom Overview</div>
  <svg class="abs" style="left:107px;top:4px" width="28" height="12" viewBox="0 0 28 12" fill="none" stroke="#fff"><rect x="1" y="4" width="6" height="6" stroke-width="1.300"/><path d="M3.500,4V1.500H9.500V7.500H7" stroke-width="1.300"/><path d="M16,1.500L24,10.500M24,1.500L16,10.500" stroke-width="2.100"/></svg>
</div>
<!-- horizontal scrollbar -->
<div class="abs" style="left:3px;top:893px;width:1914px;height:16px;background:linear-gradient(#efe9dd,#f7f3ec 40%,#faf7f2)"></div>
<div class="abs sbb" style="left:3px;top:893px"></div>
<div class="abs sbb" style="left:1901px;top:893px"></div>
<svg class="abs" style="left:3px;top:893px" width="16" height="16" viewBox="0 0 16 16" fill="none" stroke="#5a5348" stroke-width="1.200"><path d="M10.500,3.500L5.500,8L10.500,12.500"/></svg>
<svg class="abs" style="left:1901px;top:893px" width="16" height="16" viewBox="0 0 16 16" fill="none" stroke="#5a5348" stroke-width="1.200"><path d="M5.500,3.500L10.500,8L5.500,12.500"/></svg>
<div class="abs" style="left:772px;top:893px;width:374px;height:15px;border:1px solid #a39a8b;border-radius:2px;background:linear-gradient(#f6f3ec,#ebe6da)"></div>
<div class="abs" style="left:956px;top:897px;width:1px;height:7px;background:#776f63"></div><div class="abs" style="left:958px;top:897px;width:1px;height:7px;background:#776f63"></div><div class="abs" style="left:960px;top:897px;width:1px;height:7px;background:#776f63"></div>
<!-- ================= DOCK PANELS ================= -->
<div class="dock" style="top:911px"><div class="t"  style="left:6px;top:1px;line-height:15px;transform-origin:0 0;transform:scaleX(0.8561)">Channel Labels</div>
  <svg class="abs" style="left:1876.5px;top:2px" width="40" height="14" viewBox="0 0 40 14" fill="none" stroke="#fff"><path d="M3.700,1.700h3.800v3.500h-3.800zM2,5.600h7.200M5.600,6v4.800" stroke-width="1.700"/><rect x="14.500" y="8.200" width="7" height="2.700" fill="#fff" stroke="none"/><path d="M29.300,1.500L38,10.300M38,1.500L29.300,10.300" stroke-width="2.200"/></svg>
</div>
<div class="abs" style="left:0;top:911px;width:2px;height:87px;background:#9b9b9b"></div><div class="abs" style="left:2px;top:928px;width:1917px;height:29px;background:#fff"></div>
<div class="t" style="left:8px;top:935px;font-weight:bold">A</div>
<div class="field" style="left:25px;top:929px;width:562px;height:26px"><div class="t"  style="left:5.25px;top:5px;transform-origin:0 0;transform:scaleX(0.9557)">[Select Label]</div><i class="dd" style="left:519px;top:10px"></i></div>
<div class="abs" style="left:563px;top:931px;width:22px;height:22px;border:1px solid #7f7668;border-radius:3px;background:linear-gradient(#f6f3ec,#e9e4d8)"><div class="t" style="left:5px;top:0;font-weight:bold;letter-spacing:0.500px">...</div></div>
<div class="field" style="left:590px;top:929px;width:946px;height:26px"><div class="t"  style="left:4px;top:5px;color:#8a8a8a;transform-origin:0 0;transform:scaleX(0.9782)">[Enter Channel Notes]</div></div>
<div class="field" style="left:1540px;top:929px;width:379px;height:26px"><div class="t"  style="left:5.25px;top:5px;transform-origin:0 0;transform:scaleX(1.0032)">[Select Good/Bad/Unknown]</div><i class="dd" style="left:360px;top:10px"></i></div>
<div class="dock" style="top:957px"><div class="t"  style="left:6.5px;top:1px;line-height:15px;transform-origin:0 0;transform:scaleX(0.9343)">Notes</div>
  <svg class="abs" style="left:1876.5px;top:2px" width="40" height="14" viewBox="0 0 40 14" fill="none" stroke="#fff"><path d="M3.700,1.700h3.800v3.500h-3.800zM2,5.600h7.200M5.600,6v4.800" stroke-width="1.700"/><rect x="14.500" y="8.200" width="7" height="2.700" fill="#fff" stroke="none"/><path d="M29.300,1.500L38,10.300M38,1.500L29.300,10.300" stroke-width="2.200"/></svg>
</div>
<div class="abs" style="left:2px;top:974px;width:1917px;height:24px;background:#fff"></div>
<div class="t"  style="left:8.75px;top:977px;transform-origin:0 0;transform:scaleX(1.0190)">#2 running in cylinder</div>
<div class="abs" style="left:1900px;top:975px;width:16px;height:23px;background:#f3f3f3"></div>
<i class="tri" style="left:1904px;top:980px;border-width:0 4.500px 6px 4.500px;border-color:transparent transparent #adadad transparent"></i>
<i class="tri" style="left:1904px;top:993px;border-width:6px 4.500px 0 4.500px;border-color:#adadad transparent transparent transparent"></i>
<!-- ================= STATUS BAR ================= -->
<div id="status" class="abs">
  <div class="t"  style="left:10px;top:9px;color:#7d7d7d;transform-origin:0 0;transform:scaleX(0.9783)">Stopped</div>
  <i class="tri" style="left:72px;top:10px;border-width:5px 0 5px 7px;border-color:transparent transparent transparent #a9d0a9"></i>
  <div class="abs" style="left:88px;top:4px;width:25px;height:24px;background:#d5e3ec;border:1px solid #c3d4e0"></div>
  <div class="abs" style="left:96px;top:11px;width:10px;height:10px;background:#f0a79c"></div>
  <div class="sep" style="left:116px;top:3px;height:26px"></div>
  <div class="t"  style="left:122.5px;top:9px;transform-origin:0 0;transform:scaleX(0.9780)">Trigger</div>
  <div class="combo" style="left:170px;top:3px;width:75px;height:26px"><div class="t"  style="left:3.25px;top:5px;color:#c2c2c2;transform-origin:0 0;transform:scaleX(0.9847)">None</div><i class="dd" style="left:56px;top:10px;border-top-color:#b4b4b4"></i></div>
  <svg class="abs" style="left:250px;top:6px" width="20" height="20" viewBox="0 0 20 20" fill="none" stroke="#b7b2a6" stroke-width="1.300"><path d="M2,14.500h4.500V7h6v7.500h3.500"/><path d="M10.500,7L15,2.500" stroke-width="1.100"/><path d="M11,2h5v5z" fill="#b7b2a6" stroke="none"/><circle cx="9.500" cy="10.500" r="1.300" stroke-width=".8" stroke="#9fc0b4"/></svg>
  <div class="sep" style="left:275px;top:3px;height:26px"></div>
  <div class="combo" style="left:283px;top:3px;width:44px;height:26px"><div class="t" style="left:5px;top:5px;color:#c8c8c8">A</div><i class="dd" style="left:26px;top:10px;border-top-color:#b4b4b4"></i></div>
  <div class="sep" style="left:331px;top:3px;height:26px"></div>
  <div class="abs" style="left:335px;top:3px;width:26px;height:26px;background:#d3e2ec;border:1px solid #c6d6e2"></div>
  <svg class="abs" style="left:338px;top:6px" width="20" height="20" viewBox="0 0 20 20" fill="none" stroke="#7f909c" stroke-width="1.100"><path d="M3,16C9,16 9,4 16,3.500"/><path d="M9.500,3v4.500M8,6l1.500,1.800L11,6M9.500,17v-4.500M8,14l1.500,-1.800L11,14" stroke-width=".9"/></svg>
  <svg class="abs" style="left:364px;top:6px" width="20" height="20" viewBox="0 0 20 20" fill="none" stroke="#b9b4a8" stroke-width="1.100"><path d="M3,3.500C9,4 9,16 16,16"/><path d="M9.500,3v4.500M8,6l1.500,1.800L11,6M9.500,17v-4.500M8,14l1.500,-1.800L11,14" stroke-width=".9"/></svg>
  <div class="sep" style="left:389px;top:3px;height:26px"></div>
  <div class="spin dis" style="left:397px;top:3px;width:109px;height:26px">
    <div class="b l"><i class="tri" style="left:8px;top:7px;border-width:5px 7px 5px 0;border-color:transparent #6aa0c0 transparent transparent"></i></div>
    <div class="t"  style="left:31.5px;top:5px;color:#c6c6c6;transform-origin:0 0;transform:scaleX(0.9563)">0 psi</div>
    <div class="b r"><i class="tri" style="left:9px;top:7px;border-width:5px 0 5px 7px;border-color:transparent transparent transparent #6aa0c0"></i></div>
  </div>
  <div class="sep" style="left:510px;top:3px;height:26px"></div>
  <div class="spin dis" style="left:518px;top:3px;width:109px;height:26px">
    <div class="b l"><i class="tri" style="left:8px;top:7px;border-width:5px 7px 5px 0;border-color:transparent #6aa0c0 transparent transparent"></i></div>
    <div class="t"  style="left:32.25px;top:5px;color:#c6c6c6;transform-origin:0 0;transform:scaleX(0.8955)">50 %</div>
    <div class="b r"><i class="tri" style="left:9px;top:7px;border-width:5px 0 5px 7px;border-color:transparent transparent transparent #6aa0c0"></i></div>
  </div>
  <div class="sep" style="left:631px;top:3px;height:26px"></div>
  <div class="t"  style="left:639.25px;top:9px;transform-origin:0 0;transform:scaleX(0.9764)">Measurements</div>
  <div class="gbtn" style="left:726px;top:8px"><svg width="13" height="13" viewBox="0 0 13 13"><path d="M6.500,2.500v8M2.500,6.500h8" stroke="#fff" stroke-width="2.200"/></svg></div>
  <div class="gbtn" style="left:752px;top:8px;opacity:.3"><svg width="13" height="13" viewBox="0 0 13 13"><path d="M2.500,6.500h8" stroke="#fff" stroke-width="2.200"/></svg></div>
  <div class="gbtn" style="left:778px;top:8px;opacity:.3"><svg width="13" height="13" viewBox="0 0 13 13"><path d="M2,10L6.500,3.500L11,10Z" fill="#fff"/></svg></div>
  <div class="sep" style="left:800px;top:3px;height:26px"></div>
  <div class="t"  style="left:808px;top:9px;transform-origin:0 0;transform:scaleX(0.9225)">Rulers</div>
  <div class="gbtn" style="left:849px;top:8px"><svg width="13" height="13" viewBox="0 0 13 13"><path d="M2,10L6.500,3.500L11,10Z" fill="#fff"/></svg></div>
  <div class="t"  style="left:873.25px;top:9px;transform-origin:0 0;transform:scaleX(0.9726)">Notes</div>
  <div class="gbtn" style="left:910px;top:8px"><svg width="13" height="13" viewBox="0 0 13 13"><path d="M2,10L6.500,3.500L11,10Z" fill="#fff"/></svg></div>
  <div class="t"  style="left:933.25px;top:9px;transform-origin:0 0;transform:scaleX(0.9562)">Channel Labels</div>
  <div class="gbtn" style="left:1020px;top:8px"><svg width="13" height="13" viewBox="0 0 13 13"><path d="M2,10L6.500,3.500L11,10Z" fill="#fff"/></svg></div>
</div>
<!-- ================= TASKBAR ================= -->
<div id="taskbar" class="abs">
  <div class="abs" style="left:1183px;top:5px;width:40px;height:40px;border-radius:4px;background:#30333a;border:1px solid #393c43"></div>
  <div class="abs" style="left:1195px;top:40px;width:16px;height:3px;border-radius:2px;background:#aeb4bd"></div>
  <svg class="abs" style="left:700px;top:8px" width="520" height="32" viewBox="0 0 520 32">
    <!-- start -->
    <g><rect x="7" y="5" width="10.500" height="10.500" fill="#4fc3f7"/><rect x="18.500" y="5" width="10.500" height="10.500" fill="#41b6f2"/><rect x="7" y="16.500" width="10.500" height="10.500" fill="#35a9ee"/><rect x="18.500" y="16.500" width="10.500" height="10.500" fill="#2b9ce6"/></g>
    <!-- search -->
    <g transform="translate(44,0)"><circle cx="20.500" cy="13.500" r="7.500" fill="#4a4a4a" stroke="#f2f2f2" stroke-width="2.600"/><path d="M15,19.500L9.500,26" stroke="#f2f2f2" stroke-width="3" stroke-linecap="round"/></g>
    <!-- task view -->
    <g transform="translate(88,0)"><rect x="6" y="11" width="17" height="14" rx="1" fill="#6c6c6c"/><rect x="12" y="5" width="17" height="14" rx="1" fill="#f2f2f2"/><rect x="12" y="11" width="11" height="8" fill="#bdbdbd"/></g>
    <!-- widgets -->
    <g transform="translate(132,0)"><rect x="6" y="5" width="24" height="21" rx="2" fill="#1c4f86"/><rect x="8" y="7" width="9.500" height="17" rx="1" fill="#f4f8fc"/><rect x="19" y="7" width="9" height="9.500" fill="#49c0f5"/><rect x="19" y="17" width="9" height="7" fill="#2386e0"/></g>
    <!-- teams chat -->
    <g transform="translate(176,0)"><path d="M18.500,4.500 a11.500,11.500 0 1 1 -7,20.600 L6.500,27 L8.500,21.500 a11.500,11.500 0 0 1 10,-17Z" fill="#7c6bd0"/><path d="M18.500,4.500 a11.500,11.500 0 0 1 0,23" fill="#9a7fd8" opacity=".6"/><rect x="12" y="11.500" width="10" height="8.500" rx="1.500" fill="#fff"/><path d="M22.500,15.700L26,13v6z" fill="#fff"/></g>
    <!-- edge -->
    <g transform="translate(220,0)"><circle cx="18" cy="16" r="12" fill="#1f7bd0"/><path d="M6.500,13 C9,5 20,2 27,8 C30,11 30.500,15 29,18 C27,13 20,11 16,14 C12,10 8,11 6.500,13Z" fill="#3fd08a"/><path d="M16,14 c-4,3 -3,9 3,11 c4,1 8,-1 10,-4 c-3,2 -8,2 -9,-2 c0,-2 2,-3 2,-4 c-2,-2 -4,-2 -6,-1z" fill="#0c4fa0"/></g>
    <!-- explorer -->
    <g transform="translate(264,0)"><path d="M6,8 a1.500,1.500 0 0 1 1.500,-1.500 h6 l2.500,2.500 h12.500 a1.500,1.500 0 0 1 1.500,1.500 v14 h-24z" fill="#e9a825"/><rect x="6" y="10.500" width="24" height="15.500" rx="1.500" fill="#fbd048"/><rect x="12.500" y="19" width="11" height="7" fill="#2b78d0"/><rect x="12.500" y="19" width="11" height="2.500" fill="#4a9ce8"/></g>
    <!-- mail -->
    <g transform="translate(308,0)"><path d="M6,13L18,5L30,13V26H6z" fill="#1c6fc2"/><path d="M7.500,13.500L18,20L28.500,13.500V12H7.500z" fill="#e9f6ff"/><path d="M6,14L18,21.500L30,14V26H6z" fill="#2fa4ea"/><path d="M6,26L18,18.500L30,26z" fill="#1b8ddc"/></g>
    <!-- piston app -->
    <g transform="translate(352,0)"><rect x="6" y="4" width="24" height="24" fill="#fff"/><rect x="13" y="6.500" width="10" height="8" rx="1" fill="#111"/><rect x="12" y="5.500" width="12" height="2" fill="#111"/><circle cx="18" cy="11" r="1.500" fill="#fff"/><path d="M17,14L19.500,23" stroke="#111" stroke-width="2.600"/><circle cx="20" cy="24" r="2.600" fill="#fff" stroke="#111" stroke-width="1.800"/></g>
    <!-- OECS app -->
    <g transform="translate(396,0)"><rect x="6" y="4" width="24" height="24" fill="#fff"/><text x="18" y="19" font-family="Liberation Sans, sans-serif" font-size="6.200" font-weight="bold" font-style="italic" text-anchor="middle" fill="#2a3590">OECS</text><path d="M9,22h12" stroke="#555" stroke-width="1"/><path d="M18,8h6" stroke="#333" stroke-width="1.500"/><path d="M9,10c0,12 2,14 16,13" fill="none" stroke="#c9c9e6" stroke-width=".7"/></g>
    <!-- paint -->
    <g transform="translate(440,0)"><path d="M18,4.500 C10,4.500 5.500,10.500 6.500,17 C7.500,23 12,27.500 16,26.500 C19,25.500 16,21.500 18.500,20 C21,18.500 25,22 28,18.500 C31,12 26,4.500 18,4.500Z" fill="#3d9be0"/><path d="M18,4.500 C24,4.500 29,9 29,14.500 C26,10 20,8 14,9.500 C15,6 16,5 18,4.500Z" fill="#63c2f3"/><circle cx="12" cy="11.500" r="2.200" fill="#4fc07a"/><circle cx="17.500" cy="8.800" r="2.200" fill="#a3cf62"/><circle cx="10.800" cy="17.300" r="2.200" fill="#9e9e9e"/><circle cx="20" cy="15" r="1.800" fill="#1d3f8c"/><rect x="24.500" y="11" width="3" height="15" rx="1" fill="#c98c4a"/><rect x="24.500" y="9" width="3" height="4" fill="#f0e2c8"/></g>
    <!-- picoscope -->
    <g transform="translate(484,0)"><rect x="15" y="3" width="14" height="10" fill="#1a1a1a"/><rect x="16" y="4" width="12" height="2.500" fill="#d85a4a"/><rect x="16" y="7" width="5.500" height="2.500" fill="#e8c020"/><rect x="22" y="7" width="6" height="2.500" fill="#38b048"/><rect x="16" y="10" width="12" height="2" fill="#3cb850"/><polygon points="5,17 18,11 28,18 14,25" fill="#3b6fa6"/><polygon points="8,17 18,12.500 25,17.600 14,22.800" fill="#86c0ea"/><polygon points="5,17 14,25 14,27 5,19" fill="#1d3c5e"/><polygon points="14,25 28,18 28,20 14,27" fill="#29527e"/></g>
  </svg>
  <!-- tray -->
  <svg class="abs" style="left:1706px;top:8px" width="110" height="32" viewBox="0 0 110 32" fill="none" stroke="#f4f4f4" stroke-width="1.350" stroke-linecap="round" stroke-linejoin="round">
    <path d="M8.500,19L14,13.500L19.500,19"/>
    <g transform="translate(36.200,7.500)"><path d="M2.200,6.300 a9.800,9.800 0 0 1 14.600,0"/><path d="M4.800,9 a6.300,6.300 0 0 1 9.400,0"/><path d="M7.300,11.600 a3,3 0 0 1 4.400,0"/><circle cx="9.500" cy="14.200" r="1.100" fill="#f4f4f4" stroke="none"/></g>
    <g transform="translate(60.500,8.500)"><path d="M1.500,5h2.800l3.800,-3.500v11l-3.800,-3.500h-2.800z"/><path d="M10.500,4.500 a3.200,3.200 0 0 1 0,5"/><path d="M12.800,2.300 a6.300,6.300 0 0 1 0,9.400"/><path d="M15,0.300 a9,9 0 0 1 0,13.400"/></g>
    <g transform="translate(84.500,8)"><rect x="4.500" y="4.800" width="10.500" height="8" rx="1.500" stroke-width="1.400"/><rect x="6.300" y="6.600" width="6.900" height="4.400" fill="#f4f4f4" stroke="none"/><path d="M16.600,7.300v3" stroke-width="1.700"/><path d="M1.600,5.500h2.900M2.200,5.500v-3.500M4.600,5.500v-3.500M3.400,5.500v7.300h1.100" stroke-width="1.200"/></g>
  </svg>
  <div class="t"  style="left:1828.750px;top:10px;color:#fff;font-size:10.600px;line-height:12px;transform-origin:0 0;transform:scaleX(1.0472)">12:46 PM</div>
  <div class="t"  style="left:1822.500px;top:26px;color:#fff;font-size:10.600px;line-height:12px;transform-origin:0 0;transform:scaleX(1.1402)">1/28/2022</div>
  <div class="abs" style="left:1884px;top:16px;width:16px;height:16px;border-radius:8px;background:#b3c9e6"></div>
  <div class="t" style="left:1884px;top:17px;width:16px;text-align:center;color:#26364c;font-size:10.500px">4</div>
</div>
<!--REST_END-->
</body>
</html>
